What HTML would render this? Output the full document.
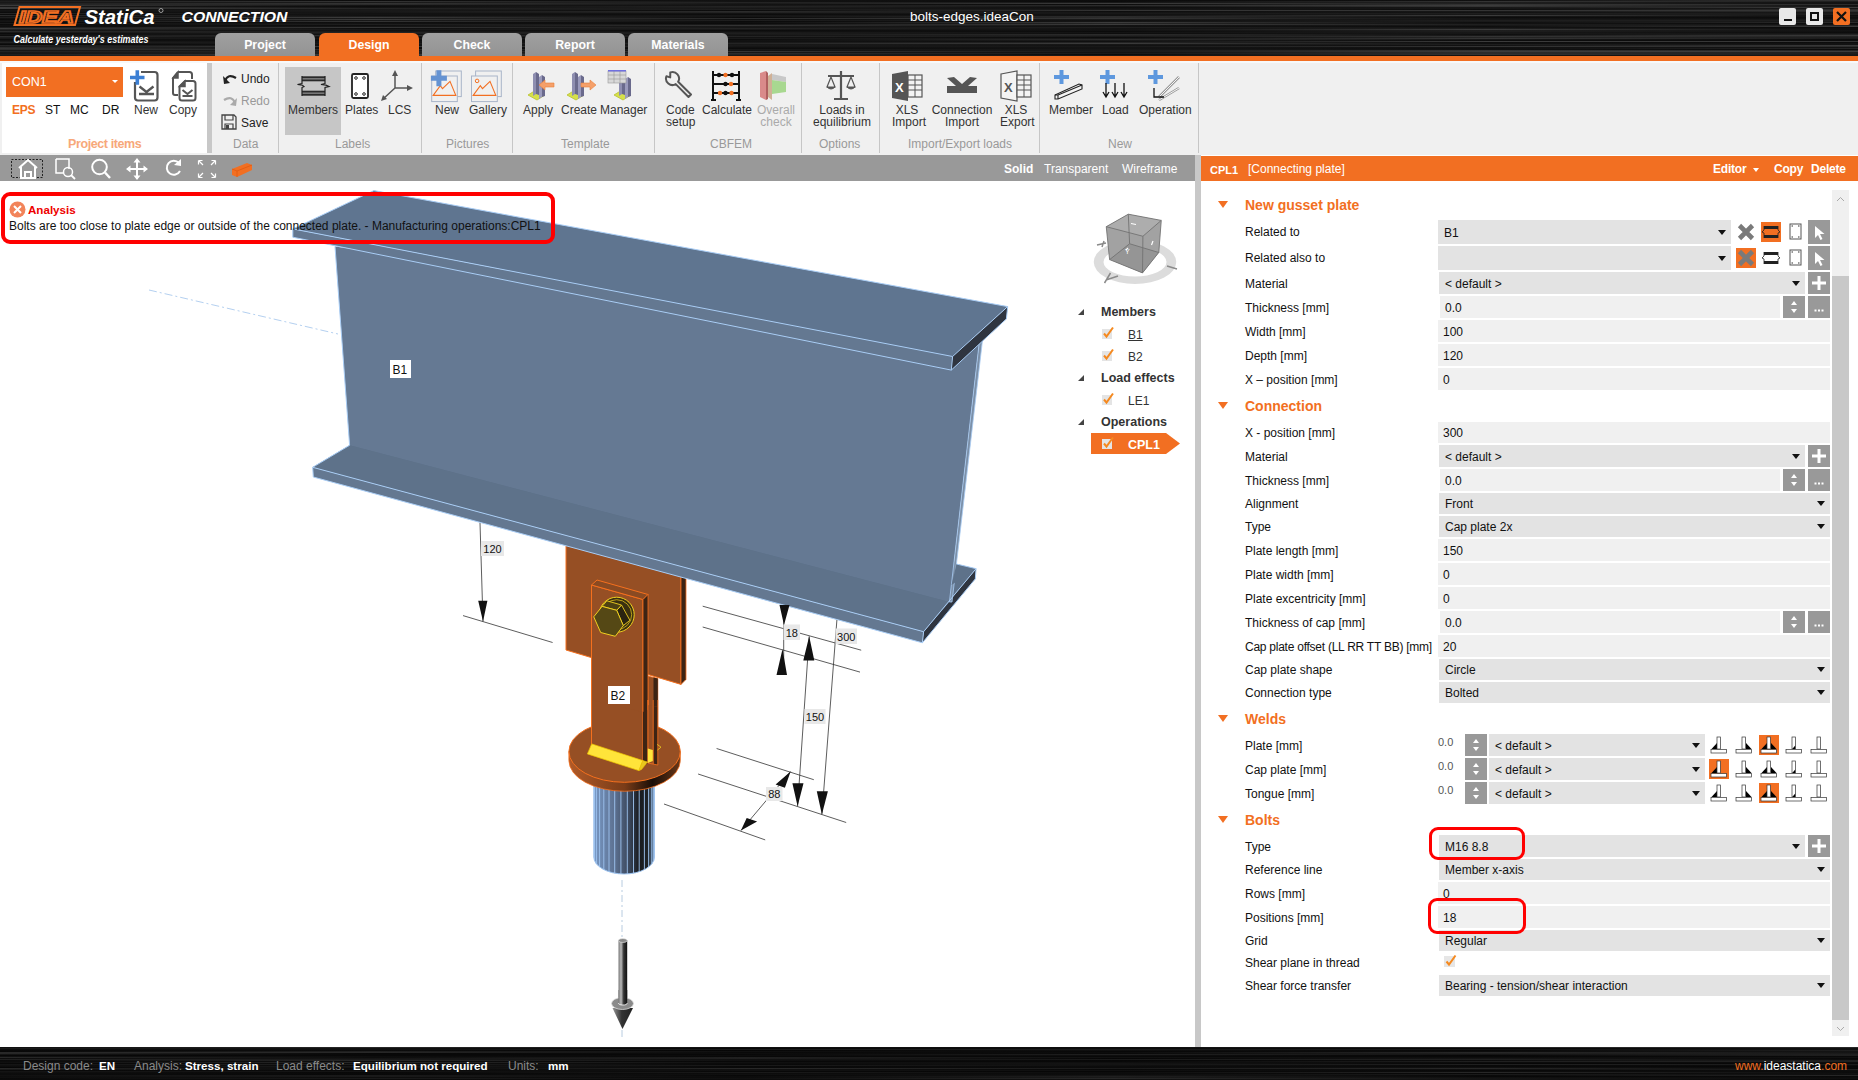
<!DOCTYPE html>
<html><head><meta charset="utf-8">
<style>
*{box-sizing:border-box;margin:0;padding:0}
html,body{width:1858px;height:1080px;overflow:hidden;background:#fff;font-family:"Liberation Sans",sans-serif;}
.a{position:absolute}
#title{left:0;top:0;width:1858px;height:56px;background:
 repeating-linear-gradient(180deg,rgba(255,255,255,0.05) 0px,rgba(0,0,0,0) 1px,rgba(255,255,255,0.03) 2px,rgba(0,0,0,0.1) 3px),
 linear-gradient(90deg,#141414,#1a1a1a 40%,#111 70%,#1a1a1a);}
#orange1{left:0;top:56px;width:1858px;height:5px;background:#f26f22}
#ribbon{left:0;top:61px;width:1858px;height:94px;background:#f0f0f0;border-top:2px solid #f7f9fa}
.tab{top:33px;height:23px;width:100px;border-radius:6px 6px 0 0;background:linear-gradient(#a0a0a0,#939393);color:#fff;font-weight:bold;font-size:12.3px;text-align:center;line-height:24px}
.tab.on{background:#f26f22}
#toolbar{left:0;top:155px;width:1195px;height:26px;background:#999}
#split{left:1195px;top:155px;width:6px;height:892px;background:#c8c8c8}
#phead{left:1201px;top:156px;width:657px;height:25px;background:#f26f22;color:#fff;font-size:13px}
#status{left:0;top:1047px;width:1858px;height:33px;background:
 repeating-linear-gradient(180deg,rgba(255,255,255,0.05) 0px,rgba(0,0,0,0) 1px,rgba(255,255,255,0.03) 2px,rgba(0,0,0,0.1) 3px),
 linear-gradient(90deg,#141414,#1a1a1a 40%,#111 70%,#1a1a1a);color:#fff;font-size:13px}
.sec{font-size:14px;font-weight:bold;color:#f26f22;line-height:16px;white-space:nowrap}
.lab{font-size:12px;color:#111;line-height:13px;white-space:nowrap}
.dd{background:#e3e3e3;font-size:12px;color:#111;padding-left:6px;padding-top:1px;white-space:nowrap}
.inp{background:#f0f0f0;font-size:12px;color:#111;padding-left:5px;padding-top:1px;white-space:nowrap}
.gb{background:#999}
</style></head><body>
<div id="title" class="a"><svg class="a" style="left:0;top:0" width="1858" height="56" viewBox="0 0 1858 56" preserveAspectRatio="none"><defs><linearGradient id="bt0"><stop offset="0.00" stop-color="rgb(24,24,24)"/><stop offset="0.20" stop-color="rgb(12,12,12)"/><stop offset="0.40" stop-color="rgb(18,18,18)"/><stop offset="0.60" stop-color="rgb(12,12,12)"/><stop offset="0.80" stop-color="rgb(16,16,16)"/><stop offset="1.00" stop-color="rgb(52,52,52)"/></linearGradient><linearGradient id="bt1"><stop offset="0.00" stop-color="rgb(30,30,30)"/><stop offset="0.20" stop-color="rgb(52,52,52)"/><stop offset="0.40" stop-color="rgb(18,18,18)"/><stop offset="0.60" stop-color="rgb(11,11,11)"/><stop offset="0.80" stop-color="rgb(52,52,52)"/><stop offset="1.00" stop-color="rgb(30,30,30)"/></linearGradient><linearGradient id="bt2"><stop offset="0.00" stop-color="rgb(24,24,24)"/><stop offset="0.20" stop-color="rgb(24,24,24)"/><stop offset="0.40" stop-color="rgb(36,36,36)"/><stop offset="0.60" stop-color="rgb(24,24,24)"/><stop offset="0.80" stop-color="rgb(30,30,30)"/><stop offset="1.00" stop-color="rgb(18,18,18)"/></linearGradient><linearGradient id="bt3"><stop offset="0.00" stop-color="rgb(30,30,30)"/><stop offset="0.20" stop-color="rgb(52,52,52)"/><stop offset="0.40" stop-color="rgb(24,24,24)"/><stop offset="0.60" stop-color="rgb(60,60,60)"/><stop offset="0.80" stop-color="rgb(30,30,30)"/><stop offset="1.00" stop-color="rgb(17,17,17)"/></linearGradient><linearGradient id="bt4"><stop offset="0.00" stop-color="rgb(36,36,36)"/><stop offset="0.20" stop-color="rgb(44,44,44)"/><stop offset="0.40" stop-color="rgb(19,19,19)"/><stop offset="0.60" stop-color="rgb(12,12,12)"/><stop offset="0.80" stop-color="rgb(52,52,52)"/><stop offset="1.00" stop-color="rgb(44,44,44)"/></linearGradient><linearGradient id="bt5"><stop offset="0.00" stop-color="rgb(60,60,60)"/><stop offset="0.20" stop-color="rgb(18,18,18)"/><stop offset="0.40" stop-color="rgb(20,20,20)"/><stop offset="0.60" stop-color="rgb(44,44,44)"/><stop offset="0.80" stop-color="rgb(60,60,60)"/><stop offset="1.00" stop-color="rgb(18,18,18)"/></linearGradient><linearGradient id="bt6"><stop offset="0.00" stop-color="rgb(25,25,25)"/><stop offset="0.20" stop-color="rgb(12,12,12)"/><stop offset="0.40" stop-color="rgb(36,36,36)"/><stop offset="0.60" stop-color="rgb(24,24,24)"/><stop offset="0.80" stop-color="rgb(52,52,52)"/><stop offset="1.00" stop-color="rgb(21,21,21)"/></linearGradient><linearGradient id="bt7"><stop offset="0.00" stop-color="rgb(60,60,60)"/><stop offset="0.20" stop-color="rgb(18,18,18)"/><stop offset="0.40" stop-color="rgb(30,30,30)"/><stop offset="0.60" stop-color="rgb(14,14,14)"/><stop offset="0.80" stop-color="rgb(22,22,22)"/><stop offset="1.00" stop-color="rgb(60,60,60)"/></linearGradient><linearGradient id="bt8"><stop offset="0.00" stop-color="rgb(60,60,60)"/><stop offset="0.20" stop-color="rgb(36,36,36)"/><stop offset="0.40" stop-color="rgb(23,23,23)"/><stop offset="0.60" stop-color="rgb(18,18,18)"/><stop offset="0.80" stop-color="rgb(21,21,21)"/><stop offset="1.00" stop-color="rgb(22,22,22)"/></linearGradient><linearGradient id="bt9"><stop offset="0.00" stop-color="rgb(14,14,14)"/><stop offset="0.20" stop-color="rgb(24,24,24)"/><stop offset="0.40" stop-color="rgb(30,30,30)"/><stop offset="0.60" stop-color="rgb(24,24,24)"/><stop offset="0.80" stop-color="rgb(12,12,12)"/><stop offset="1.00" stop-color="rgb(44,44,44)"/></linearGradient><linearGradient id="bt10"><stop offset="0.00" stop-color="rgb(20,20,20)"/><stop offset="0.20" stop-color="rgb(26,26,26)"/><stop offset="0.40" stop-color="rgb(11,11,11)"/><stop offset="0.60" stop-color="rgb(52,52,52)"/><stop offset="0.80" stop-color="rgb(52,52,52)"/><stop offset="1.00" stop-color="rgb(52,52,52)"/></linearGradient><linearGradient id="bt11"><stop offset="0.00" stop-color="rgb(18,18,18)"/><stop offset="0.20" stop-color="rgb(24,24,24)"/><stop offset="0.40" stop-color="rgb(44,44,44)"/><stop offset="0.60" stop-color="rgb(13,13,13)"/><stop offset="0.80" stop-color="rgb(24,24,24)"/><stop offset="1.00" stop-color="rgb(44,44,44)"/></linearGradient><linearGradient id="bt12"><stop offset="0.00" stop-color="rgb(12,12,12)"/><stop offset="0.20" stop-color="rgb(22,22,22)"/><stop offset="0.40" stop-color="rgb(36,36,36)"/><stop offset="0.60" stop-color="rgb(21,21,21)"/><stop offset="0.80" stop-color="rgb(18,18,18)"/><stop offset="1.00" stop-color="rgb(24,24,24)"/></linearGradient><linearGradient id="bt13"><stop offset="0.00" stop-color="rgb(36,36,36)"/><stop offset="0.20" stop-color="rgb(18,18,18)"/><stop offset="0.40" stop-color="rgb(18,18,18)"/><stop offset="0.60" stop-color="rgb(24,24,24)"/><stop offset="0.80" stop-color="rgb(30,30,30)"/><stop offset="1.00" stop-color="rgb(26,26,26)"/></linearGradient><linearGradient id="bt14"><stop offset="0.00" stop-color="rgb(12,12,12)"/><stop offset="0.20" stop-color="rgb(19,19,19)"/><stop offset="0.40" stop-color="rgb(12,12,12)"/><stop offset="0.60" stop-color="rgb(18,18,18)"/><stop offset="0.80" stop-color="rgb(24,24,24)"/><stop offset="1.00" stop-color="rgb(30,30,30)"/></linearGradient><linearGradient id="bt15"><stop offset="0.00" stop-color="rgb(44,44,44)"/><stop offset="0.20" stop-color="rgb(16,16,16)"/><stop offset="0.40" stop-color="rgb(22,22,22)"/><stop offset="0.60" stop-color="rgb(17,17,17)"/><stop offset="0.80" stop-color="rgb(60,60,60)"/><stop offset="1.00" stop-color="rgb(12,12,12)"/></linearGradient><linearGradient id="bt16"><stop offset="0.00" stop-color="rgb(18,18,18)"/><stop offset="0.20" stop-color="rgb(30,30,30)"/><stop offset="0.40" stop-color="rgb(21,21,21)"/><stop offset="0.60" stop-color="rgb(44,44,44)"/><stop offset="0.80" stop-color="rgb(21,21,21)"/><stop offset="1.00" stop-color="rgb(18,18,18)"/></linearGradient><linearGradient id="bt17"><stop offset="0.00" stop-color="rgb(30,30,30)"/><stop offset="0.20" stop-color="rgb(60,60,60)"/><stop offset="0.40" stop-color="rgb(10,10,10)"/><stop offset="0.60" stop-color="rgb(44,44,44)"/><stop offset="0.80" stop-color="rgb(12,12,12)"/><stop offset="1.00" stop-color="rgb(13,13,13)"/></linearGradient><linearGradient id="bt18"><stop offset="0.00" stop-color="rgb(16,16,16)"/><stop offset="0.20" stop-color="rgb(24,24,24)"/><stop offset="0.40" stop-color="rgb(44,44,44)"/><stop offset="0.60" stop-color="rgb(52,52,52)"/><stop offset="0.80" stop-color="rgb(18,18,18)"/><stop offset="1.00" stop-color="rgb(15,15,15)"/></linearGradient><linearGradient id="bt19"><stop offset="0.00" stop-color="rgb(10,10,10)"/><stop offset="0.20" stop-color="rgb(60,60,60)"/><stop offset="0.40" stop-color="rgb(14,14,14)"/><stop offset="0.60" stop-color="rgb(25,25,25)"/><stop offset="0.80" stop-color="rgb(21,21,21)"/><stop offset="1.00" stop-color="rgb(24,24,24)"/></linearGradient><linearGradient id="bt20"><stop offset="0.00" stop-color="rgb(18,18,18)"/><stop offset="0.20" stop-color="rgb(24,24,24)"/><stop offset="0.40" stop-color="rgb(30,30,30)"/><stop offset="0.60" stop-color="rgb(16,16,16)"/><stop offset="0.80" stop-color="rgb(30,30,30)"/><stop offset="1.00" stop-color="rgb(30,30,30)"/></linearGradient><linearGradient id="bt21"><stop offset="0.00" stop-color="rgb(20,20,20)"/><stop offset="0.20" stop-color="rgb(52,52,52)"/><stop offset="0.40" stop-color="rgb(11,11,11)"/><stop offset="0.60" stop-color="rgb(21,21,21)"/><stop offset="0.80" stop-color="rgb(26,26,26)"/><stop offset="1.00" stop-color="rgb(24,24,24)"/></linearGradient><linearGradient id="bt22"><stop offset="0.00" stop-color="rgb(12,12,12)"/><stop offset="0.20" stop-color="rgb(15,15,15)"/><stop offset="0.40" stop-color="rgb(14,14,14)"/><stop offset="0.60" stop-color="rgb(60,60,60)"/><stop offset="0.80" stop-color="rgb(13,13,13)"/><stop offset="1.00" stop-color="rgb(44,44,44)"/></linearGradient><linearGradient id="bt23"><stop offset="0.00" stop-color="rgb(26,26,26)"/><stop offset="0.20" stop-color="rgb(18,18,18)"/><stop offset="0.40" stop-color="rgb(11,11,11)"/><stop offset="0.60" stop-color="rgb(36,36,36)"/><stop offset="0.80" stop-color="rgb(18,18,18)"/><stop offset="1.00" stop-color="rgb(12,12,12)"/></linearGradient><linearGradient id="bt24"><stop offset="0.00" stop-color="rgb(12,12,12)"/><stop offset="0.20" stop-color="rgb(30,30,30)"/><stop offset="0.40" stop-color="rgb(24,24,24)"/><stop offset="0.60" stop-color="rgb(60,60,60)"/><stop offset="0.80" stop-color="rgb(30,30,30)"/><stop offset="1.00" stop-color="rgb(18,18,18)"/></linearGradient><linearGradient id="bt25"><stop offset="0.00" stop-color="rgb(16,16,16)"/><stop offset="0.20" stop-color="rgb(14,14,14)"/><stop offset="0.40" stop-color="rgb(52,52,52)"/><stop offset="0.60" stop-color="rgb(18,18,18)"/><stop offset="0.80" stop-color="rgb(23,23,23)"/><stop offset="1.00" stop-color="rgb(36,36,36)"/></linearGradient><linearGradient id="bt26"><stop offset="0.00" stop-color="rgb(14,14,14)"/><stop offset="0.20" stop-color="rgb(21,21,21)"/><stop offset="0.40" stop-color="rgb(24,24,24)"/><stop offset="0.60" stop-color="rgb(17,17,17)"/><stop offset="0.80" stop-color="rgb(13,13,13)"/><stop offset="1.00" stop-color="rgb(60,60,60)"/></linearGradient><linearGradient id="bt27"><stop offset="0.00" stop-color="rgb(30,30,30)"/><stop offset="0.20" stop-color="rgb(52,52,52)"/><stop offset="0.40" stop-color="rgb(22,22,22)"/><stop offset="0.60" stop-color="rgb(30,30,30)"/><stop offset="0.80" stop-color="rgb(18,18,18)"/><stop offset="1.00" stop-color="rgb(10,10,10)"/></linearGradient><linearGradient id="bt28"><stop offset="0.00" stop-color="rgb(60,60,60)"/><stop offset="0.20" stop-color="rgb(12,12,12)"/><stop offset="0.40" stop-color="rgb(36,36,36)"/><stop offset="0.60" stop-color="rgb(18,18,18)"/><stop offset="0.80" stop-color="rgb(30,30,30)"/><stop offset="1.00" stop-color="rgb(13,13,13)"/></linearGradient><linearGradient id="bt29"><stop offset="0.00" stop-color="rgb(36,36,36)"/><stop offset="0.20" stop-color="rgb(24,24,24)"/><stop offset="0.40" stop-color="rgb(24,24,24)"/><stop offset="0.60" stop-color="rgb(18,18,18)"/><stop offset="0.80" stop-color="rgb(60,60,60)"/><stop offset="1.00" stop-color="rgb(12,12,12)"/></linearGradient><linearGradient id="bt30"><stop offset="0.00" stop-color="rgb(24,24,24)"/><stop offset="0.20" stop-color="rgb(18,18,18)"/><stop offset="0.40" stop-color="rgb(12,12,12)"/><stop offset="0.60" stop-color="rgb(18,18,18)"/><stop offset="0.80" stop-color="rgb(30,30,30)"/><stop offset="1.00" stop-color="rgb(18,18,18)"/></linearGradient><linearGradient id="bt31"><stop offset="0.00" stop-color="rgb(44,44,44)"/><stop offset="0.20" stop-color="rgb(23,23,23)"/><stop offset="0.40" stop-color="rgb(18,18,18)"/><stop offset="0.60" stop-color="rgb(11,11,11)"/><stop offset="0.80" stop-color="rgb(30,30,30)"/><stop offset="1.00" stop-color="rgb(15,15,15)"/></linearGradient><linearGradient id="bt32"><stop offset="0.00" stop-color="rgb(24,24,24)"/><stop offset="0.20" stop-color="rgb(36,36,36)"/><stop offset="0.40" stop-color="rgb(26,26,26)"/><stop offset="0.60" stop-color="rgb(19,19,19)"/><stop offset="0.80" stop-color="rgb(24,24,24)"/><stop offset="1.00" stop-color="rgb(12,12,12)"/></linearGradient><linearGradient id="bt33"><stop offset="0.00" stop-color="rgb(11,11,11)"/><stop offset="0.20" stop-color="rgb(30,30,30)"/><stop offset="0.40" stop-color="rgb(30,30,30)"/><stop offset="0.60" stop-color="rgb(13,13,13)"/><stop offset="0.80" stop-color="rgb(23,23,23)"/><stop offset="1.00" stop-color="rgb(22,22,22)"/></linearGradient><linearGradient id="bt34"><stop offset="0.00" stop-color="rgb(19,19,19)"/><stop offset="0.20" stop-color="rgb(17,17,17)"/><stop offset="0.40" stop-color="rgb(24,24,24)"/><stop offset="0.60" stop-color="rgb(44,44,44)"/><stop offset="0.80" stop-color="rgb(14,14,14)"/><stop offset="1.00" stop-color="rgb(36,36,36)"/></linearGradient><linearGradient id="bt35"><stop offset="0.00" stop-color="rgb(12,12,12)"/><stop offset="0.20" stop-color="rgb(52,52,52)"/><stop offset="0.40" stop-color="rgb(19,19,19)"/><stop offset="0.60" stop-color="rgb(36,36,36)"/><stop offset="0.80" stop-color="rgb(24,24,24)"/><stop offset="1.00" stop-color="rgb(60,60,60)"/></linearGradient><linearGradient id="bt36"><stop offset="0.00" stop-color="rgb(44,44,44)"/><stop offset="0.20" stop-color="rgb(20,20,20)"/><stop offset="0.40" stop-color="rgb(36,36,36)"/><stop offset="0.60" stop-color="rgb(24,24,24)"/><stop offset="0.80" stop-color="rgb(52,52,52)"/><stop offset="1.00" stop-color="rgb(36,36,36)"/></linearGradient><linearGradient id="bt37"><stop offset="0.00" stop-color="rgb(30,30,30)"/><stop offset="0.20" stop-color="rgb(12,12,12)"/><stop offset="0.40" stop-color="rgb(18,18,18)"/><stop offset="0.60" stop-color="rgb(12,12,12)"/><stop offset="0.80" stop-color="rgb(36,36,36)"/><stop offset="1.00" stop-color="rgb(30,30,30)"/></linearGradient><linearGradient id="bt38"><stop offset="0.00" stop-color="rgb(24,24,24)"/><stop offset="0.20" stop-color="rgb(22,22,22)"/><stop offset="0.40" stop-color="rgb(25,25,25)"/><stop offset="0.60" stop-color="rgb(24,24,24)"/><stop offset="0.80" stop-color="rgb(52,52,52)"/><stop offset="1.00" stop-color="rgb(26,26,26)"/></linearGradient><linearGradient id="bt39"><stop offset="0.00" stop-color="rgb(12,12,12)"/><stop offset="0.20" stop-color="rgb(17,17,17)"/><stop offset="0.40" stop-color="rgb(12,12,12)"/><stop offset="0.60" stop-color="rgb(44,44,44)"/><stop offset="0.80" stop-color="rgb(22,22,22)"/><stop offset="1.00" stop-color="rgb(11,11,11)"/></linearGradient><linearGradient id="bt40"><stop offset="0.00" stop-color="rgb(17,17,17)"/><stop offset="0.20" stop-color="rgb(12,12,12)"/><stop offset="0.40" stop-color="rgb(18,18,18)"/><stop offset="0.60" stop-color="rgb(26,26,26)"/><stop offset="0.80" stop-color="rgb(12,12,12)"/><stop offset="1.00" stop-color="rgb(12,12,12)"/></linearGradient><linearGradient id="bt41"><stop offset="0.00" stop-color="rgb(25,25,25)"/><stop offset="0.20" stop-color="rgb(18,18,18)"/><stop offset="0.40" stop-color="rgb(17,17,17)"/><stop offset="0.60" stop-color="rgb(16,16,16)"/><stop offset="0.80" stop-color="rgb(60,60,60)"/><stop offset="1.00" stop-color="rgb(52,52,52)"/></linearGradient><linearGradient id="bt42"><stop offset="0.00" stop-color="rgb(36,36,36)"/><stop offset="0.20" stop-color="rgb(16,16,16)"/><stop offset="0.40" stop-color="rgb(24,24,24)"/><stop offset="0.60" stop-color="rgb(36,36,36)"/><stop offset="0.80" stop-color="rgb(14,14,14)"/><stop offset="1.00" stop-color="rgb(12,12,12)"/></linearGradient><linearGradient id="bt43"><stop offset="0.00" stop-color="rgb(18,18,18)"/><stop offset="0.20" stop-color="rgb(25,25,25)"/><stop offset="0.40" stop-color="rgb(36,36,36)"/><stop offset="0.60" stop-color="rgb(60,60,60)"/><stop offset="0.80" stop-color="rgb(16,16,16)"/><stop offset="1.00" stop-color="rgb(18,18,18)"/></linearGradient><linearGradient id="bt44"><stop offset="0.00" stop-color="rgb(10,10,10)"/><stop offset="0.20" stop-color="rgb(18,18,18)"/><stop offset="0.40" stop-color="rgb(24,24,24)"/><stop offset="0.60" stop-color="rgb(22,22,22)"/><stop offset="0.80" stop-color="rgb(30,30,30)"/><stop offset="1.00" stop-color="rgb(18,18,18)"/></linearGradient><linearGradient id="bt45"><stop offset="0.00" stop-color="rgb(36,36,36)"/><stop offset="0.20" stop-color="rgb(14,14,14)"/><stop offset="0.40" stop-color="rgb(26,26,26)"/><stop offset="0.60" stop-color="rgb(18,18,18)"/><stop offset="0.80" stop-color="rgb(17,17,17)"/><stop offset="1.00" stop-color="rgb(60,60,60)"/></linearGradient><linearGradient id="bt46"><stop offset="0.00" stop-color="rgb(24,24,24)"/><stop offset="0.20" stop-color="rgb(60,60,60)"/><stop offset="0.40" stop-color="rgb(22,22,22)"/><stop offset="0.60" stop-color="rgb(24,24,24)"/><stop offset="0.80" stop-color="rgb(52,52,52)"/><stop offset="1.00" stop-color="rgb(44,44,44)"/></linearGradient><linearGradient id="bt47"><stop offset="0.00" stop-color="rgb(44,44,44)"/><stop offset="0.20" stop-color="rgb(13,13,13)"/><stop offset="0.40" stop-color="rgb(16,16,16)"/><stop offset="0.60" stop-color="rgb(19,19,19)"/><stop offset="0.80" stop-color="rgb(18,18,18)"/><stop offset="1.00" stop-color="rgb(18,18,18)"/></linearGradient><linearGradient id="bt48"><stop offset="0.00" stop-color="rgb(52,52,52)"/><stop offset="0.20" stop-color="rgb(11,11,11)"/><stop offset="0.40" stop-color="rgb(12,12,12)"/><stop offset="0.60" stop-color="rgb(19,19,19)"/><stop offset="0.80" stop-color="rgb(14,14,14)"/><stop offset="1.00" stop-color="rgb(36,36,36)"/></linearGradient><linearGradient id="bt49"><stop offset="0.00" stop-color="rgb(44,44,44)"/><stop offset="0.20" stop-color="rgb(44,44,44)"/><stop offset="0.40" stop-color="rgb(23,23,23)"/><stop offset="0.60" stop-color="rgb(22,22,22)"/><stop offset="0.80" stop-color="rgb(16,16,16)"/><stop offset="1.00" stop-color="rgb(11,11,11)"/></linearGradient><linearGradient id="bt50"><stop offset="0.00" stop-color="rgb(23,23,23)"/><stop offset="0.20" stop-color="rgb(24,24,24)"/><stop offset="0.40" stop-color="rgb(19,19,19)"/><stop offset="0.60" stop-color="rgb(24,24,24)"/><stop offset="0.80" stop-color="rgb(52,52,52)"/><stop offset="1.00" stop-color="rgb(36,36,36)"/></linearGradient><linearGradient id="bt51"><stop offset="0.00" stop-color="rgb(36,36,36)"/><stop offset="0.20" stop-color="rgb(30,30,30)"/><stop offset="0.40" stop-color="rgb(52,52,52)"/><stop offset="0.60" stop-color="rgb(24,24,24)"/><stop offset="0.80" stop-color="rgb(60,60,60)"/><stop offset="1.00" stop-color="rgb(60,60,60)"/></linearGradient><linearGradient id="bt52"><stop offset="0.00" stop-color="rgb(24,24,24)"/><stop offset="0.20" stop-color="rgb(30,30,30)"/><stop offset="0.40" stop-color="rgb(24,24,24)"/><stop offset="0.60" stop-color="rgb(18,18,18)"/><stop offset="0.80" stop-color="rgb(44,44,44)"/><stop offset="1.00" stop-color="rgb(30,30,30)"/></linearGradient><linearGradient id="bt53"><stop offset="0.00" stop-color="rgb(23,23,23)"/><stop offset="0.20" stop-color="rgb(30,30,30)"/><stop offset="0.40" stop-color="rgb(44,44,44)"/><stop offset="0.60" stop-color="rgb(25,25,25)"/><stop offset="0.80" stop-color="rgb(44,44,44)"/><stop offset="1.00" stop-color="rgb(30,30,30)"/></linearGradient><linearGradient id="bt54"><stop offset="0.00" stop-color="rgb(30,30,30)"/><stop offset="0.20" stop-color="rgb(60,60,60)"/><stop offset="0.40" stop-color="rgb(36,36,36)"/><stop offset="0.60" stop-color="rgb(10,10,10)"/><stop offset="0.80" stop-color="rgb(52,52,52)"/><stop offset="1.00" stop-color="rgb(25,25,25)"/></linearGradient><linearGradient id="bt55"><stop offset="0.00" stop-color="rgb(25,25,25)"/><stop offset="0.20" stop-color="rgb(52,52,52)"/><stop offset="0.40" stop-color="rgb(26,26,26)"/><stop offset="0.60" stop-color="rgb(24,24,24)"/><stop offset="0.80" stop-color="rgb(18,18,18)"/><stop offset="1.00" stop-color="rgb(24,24,24)"/></linearGradient></defs><rect x="0" y="0" width="1858" height="1" fill="url(#bt0)"/><rect x="0" y="1" width="1858" height="1" fill="url(#bt1)"/><rect x="0" y="2" width="1858" height="1" fill="url(#bt2)"/><rect x="0" y="3" width="1858" height="1" fill="url(#bt3)"/><rect x="0" y="4" width="1858" height="1" fill="url(#bt4)"/><rect x="0" y="5" width="1858" height="1" fill="url(#bt5)"/><rect x="0" y="6" width="1858" height="1" fill="url(#bt6)"/><rect x="0" y="7" width="1858" height="1" fill="url(#bt7)"/><rect x="0" y="8" width="1858" height="1" fill="url(#bt8)"/><rect x="0" y="9" width="1858" height="1" fill="url(#bt9)"/><rect x="0" y="10" width="1858" height="1" fill="url(#bt10)"/><rect x="0" y="11" width="1858" height="1" fill="url(#bt11)"/><rect x="0" y="12" width="1858" height="1" fill="url(#bt12)"/><rect x="0" y="13" width="1858" height="1" fill="url(#bt13)"/><rect x="0" y="14" width="1858" height="1" fill="url(#bt14)"/><rect x="0" y="15" width="1858" height="1" fill="url(#bt15)"/><rect x="0" y="16" width="1858" height="1" fill="url(#bt16)"/><rect x="0" y="17" width="1858" height="1" fill="url(#bt17)"/><rect x="0" y="18" width="1858" height="1" fill="url(#bt18)"/><rect x="0" y="19" width="1858" height="1" fill="url(#bt19)"/><rect x="0" y="20" width="1858" height="1" fill="url(#bt20)"/><rect x="0" y="21" width="1858" height="1" fill="url(#bt21)"/><rect x="0" y="22" width="1858" height="1" fill="url(#bt22)"/><rect x="0" y="23" width="1858" height="1" fill="url(#bt23)"/><rect x="0" y="24" width="1858" height="1" fill="url(#bt24)"/><rect x="0" y="25" width="1858" height="1" fill="url(#bt25)"/><rect x="0" y="26" width="1858" height="1" fill="url(#bt26)"/><rect x="0" y="27" width="1858" height="1" fill="url(#bt27)"/><rect x="0" y="28" width="1858" height="1" fill="url(#bt28)"/><rect x="0" y="29" width="1858" height="1" fill="url(#bt29)"/><rect x="0" y="30" width="1858" height="1" fill="url(#bt30)"/><rect x="0" y="31" width="1858" height="1" fill="url(#bt31)"/><rect x="0" y="32" width="1858" height="1" fill="url(#bt32)"/><rect x="0" y="33" width="1858" height="1" fill="url(#bt33)"/><rect x="0" y="34" width="1858" height="1" fill="url(#bt34)"/><rect x="0" y="35" width="1858" height="1" fill="url(#bt35)"/><rect x="0" y="36" width="1858" height="1" fill="url(#bt36)"/><rect x="0" y="37" width="1858" height="1" fill="url(#bt37)"/><rect x="0" y="38" width="1858" height="1" fill="url(#bt38)"/><rect x="0" y="39" width="1858" height="1" fill="url(#bt39)"/><rect x="0" y="40" width="1858" height="1" fill="url(#bt40)"/><rect x="0" y="41" width="1858" height="1" fill="url(#bt41)"/><rect x="0" y="42" width="1858" height="1" fill="url(#bt42)"/><rect x="0" y="43" width="1858" height="1" fill="url(#bt43)"/><rect x="0" y="44" width="1858" height="1" fill="url(#bt44)"/><rect x="0" y="45" width="1858" height="1" fill="url(#bt45)"/><rect x="0" y="46" width="1858" height="1" fill="url(#bt46)"/><rect x="0" y="47" width="1858" height="1" fill="url(#bt47)"/><rect x="0" y="48" width="1858" height="1" fill="url(#bt48)"/><rect x="0" y="49" width="1858" height="1" fill="url(#bt49)"/><rect x="0" y="50" width="1858" height="1" fill="url(#bt50)"/><rect x="0" y="51" width="1858" height="1" fill="url(#bt51)"/><rect x="0" y="52" width="1858" height="1" fill="url(#bt52)"/><rect x="0" y="53" width="1858" height="1" fill="url(#bt53)"/><rect x="0" y="54" width="1858" height="1" fill="url(#bt54)"/><rect x="0" y="55" width="1858" height="1" fill="url(#bt55)"/></svg></div>
<div id="orange1" class="a"></div>
<div id="ribbon" class="a"></div>
<div class="a tab" style="left:215px">Project</div>
<div class="a tab on" style="left:319px">Design</div>
<div class="a tab" style="left:422px">Check</div>
<div class="a tab" style="left:525px">Report</div>
<div class="a tab" style="left:628px">Materials</div>

<!-- logo -->
<svg class="a" style="left:0;top:0" width="300" height="56" viewBox="0 0 300 56">
 <path d="M19.5 7 H80 L75 25 H14.5 Z" fill="none" stroke="#f26f22" stroke-width="2"/>
 <text x="19" y="22.5" font-family="Liberation Sans" font-weight="bold" font-style="italic" font-size="16" fill="none" stroke="#f26f22" stroke-width="1.6" textLength="55" lengthAdjust="spacingAndGlyphs">IDEA</text>
 <text x="84.5" y="23.5" font-family="Liberation Sans" font-weight="bold" font-style="italic" font-size="19.5" fill="#fff" textLength="70" lengthAdjust="spacingAndGlyphs">StatiCa</text>
 <circle cx="161" cy="10.5" r="2" fill="none" stroke="#bbb" stroke-width="0.8"/>
 <text x="181.5" y="22" font-family="Liberation Sans" font-weight="bold" font-style="italic" font-size="15.5" fill="#fff" textLength="106" lengthAdjust="spacingAndGlyphs">CONNECTION</text>
 <text x="13.5" y="42.5" font-family="Liberation Sans" font-weight="bold" font-style="italic" font-size="10" fill="#fff" textLength="135" lengthAdjust="spacingAndGlyphs">Calculate yesterday's estimates</text>
</svg>
<div class="a" style="left:910px;top:9px;color:#fff;font-size:13.5px">bolts-edges.ideaCon</div>
<div class="a" style="left:1779px;top:8px;width:17px;height:17px;background:#e8e8e8;border-radius:2px"><div class="a" style="left:5px;top:11px;width:8px;height:2px;background:#111"></div></div>
<div class="a" style="left:1806px;top:8px;width:17px;height:17px;background:#e8e8e8;border-radius:2px"><div class="a" style="left:4px;top:4px;width:9px;height:9px;border:2px solid #111"></div></div>
<div class="a" style="left:1833px;top:8px;width:17px;height:17px;background:#f26f22;border-radius:2px"><svg class="a" style="left:0;top:0" width="17" height="17"><path d="M4 4 L13 13 M13 4 L4 13" stroke="#111" stroke-width="2.2"/></svg></div>

<!-- ribbon groups -->
<div class="a" style="left:2px;top:63px;width:205px;height:90px;background:#fff"></div>
<div class="a" style="left:207px;top:63px;width:5px;height:90px;background:#c8c8c8"></div>
<div class="a" style="left:6px;top:67px;width:117px;height:30px;background:#f26f22;color:#fff;font-size:12.5px;line-height:30px;padding-left:6px">CON1</div>
<svg class="a" style="left:112px;top:80px" width="6" height="4"><path d="M0 0H6L3 3Z" fill="#fff"/></svg>
<div class="a" style="left:12px;top:103px;font-size:12px;font-weight:bold;color:#f26f22;letter-spacing:-0.3px">EPS</div>
<div class="a" style="left:45px;top:103px;font-size:12px;color:#111">ST</div>
<div class="a" style="left:70px;top:103px;font-size:12px;color:#111">MC</div>
<div class="a" style="left:102px;top:103px;font-size:12px;color:#111">DR</div>
<svg class="a" style="left:128px;top:68px" width="34" height="36" viewBox="0 0 34 36">
 <path d="M13 4 H26.5 Q29.5 4 29.5 7 V29.5 Q29.5 32.5 26.5 32.5 H10 Q7 32.5 7 29.5 V14" fill="none" stroke="#555" stroke-width="2.2"/>
 <path d="M11.5 18.5 L18.5 24 L25.5 18.5 M11 26 H26" fill="none" stroke="#555" stroke-width="2.4"/>
 <path d="M2 9.5 H16.5 M9.3 2.3 V16.7" stroke="#3b7fd4" stroke-width="3.6"/>
</svg>
<div class="a" style="left:134px;top:103px;font-size:12px;color:#333">New</div>
<svg class="a" style="left:168px;top:68px" width="34" height="36" viewBox="0 0 34 36">
 <path d="M10 4 H21.5 Q24 4 24 6.5 V11 M5 25 Q5 27 7 27 H10 M5 25 V10 L10 4" fill="none" stroke="#555" stroke-width="2"/>
 <path d="M5 10 L10 4 V10 Z" fill="#555" stroke="#555" stroke-width="1.5"/>
 <path d="M17 13 H25 Q27.5 13 27.5 15.5 V30 Q27.5 32.5 25 32.5 H14 Q11.5 32.5 11.5 30 V18.5 Z" fill="#fff" stroke="#555" stroke-width="2"/>
 <path d="M11.5 18.5 L17 13 V18.5 Z" fill="#555" stroke="#555" stroke-width="1.5"/>
 <path d="M14.5 22 L19.5 26 L24.5 22 M14.5 28 H24.5" fill="none" stroke="#555" stroke-width="2"/>
</svg>
<div class="a" style="left:169px;top:103px;font-size:12px;color:#333">Copy</div>
<div class="a glabel" style="left:68px;top:137px;color:#f7a87a;font-size:12.5px;font-weight:bold;letter-spacing:-0.4px">Project items</div>

<svg class="a" style="left:222px;top:72px" width="16" height="14" viewBox="0 0 16 14"><path d="M3 9 Q6 1 14 6" fill="none" stroke="#222" stroke-width="2.2"/><path d="M1 4 L2 12 L8 11 Z" fill="#222"/></svg>
<div class="a" style="left:241px;top:72px;font-size:12px;color:#222">Undo</div>
<svg class="a" style="left:222px;top:94px" width="16" height="14" viewBox="0 0 16 14"><path d="M13 9 Q10 1 2 6" fill="none" stroke="#aaa" stroke-width="2.2"/><path d="M15 4 L14 12 L8 11 Z" fill="#aaa"/></svg>
<div class="a" style="left:241px;top:94px;font-size:12px;color:#999">Redo</div>
<svg class="a" style="left:221px;top:114px" width="16" height="16" viewBox="0 0 16 16"><path d="M1 1 H13 L15 3 V15 H1 Z" fill="none" stroke="#444" stroke-width="1.3"/><path d="M4 1 V6 H12 V1 M4 15 V10 H12 V15" fill="none" stroke="#444" stroke-width="1.2"/><rect x="5" y="11" width="3" height="4" fill="#444"/></svg>
<div class="a" style="left:241px;top:116px;font-size:12px;color:#222">Save</div>
<div class="a glabel" style="left:233px;top:137px;color:#999;font-size:12px">Data</div>
<div class="a" style="left:278px;top:63px;width:1px;height:90px;background:#c6c6c6"></div>

<div class="a" style="left:285px;top:67px;width:56px;height:68px;background:#c6c6c6"></div>
<svg class="a" style="left:295px;top:74px" width="36" height="24" viewBox="0 0 36 24">
 <rect x="7" y="2.3" width="23" height="5" fill="#2a2a2a"/><rect x="7" y="4" width="23" height="1.6" fill="#777"/>
 <rect x="7" y="16.7" width="23" height="5" fill="#2a2a2a"/><rect x="7" y="18.4" width="23" height="1.6" fill="#777"/>
 <path d="M7 2 V9.5 L2.5 10.5 L7.5 11.2 L9 12.5 L7 13.5 V22 M30 2 V9.5 L26 10.5 L31 11.2 L34 12.5 L30 13.5 V22" fill="none" stroke="#222" stroke-width="1.2"/>
</svg>
<div class="a" style="left:288px;top:103px;font-size:12px;color:#333">Members</div>
<svg class="a" style="left:350px;top:72px" width="20" height="28" viewBox="0 0 20 28"><rect x="2" y="2" width="16" height="24" rx="1.5" fill="#fff" stroke="#222" stroke-width="1.8"/><circle cx="6" cy="6" r="1.3" fill="none" stroke="#222"/><circle cx="14" cy="6" r="1.3" fill="none" stroke="#222"/><circle cx="6" cy="22" r="1.3" fill="none" stroke="#222"/><circle cx="14" cy="22" r="1.3" fill="none" stroke="#222"/></svg>
<div class="a" style="left:345px;top:103px;font-size:12px;color:#333">Plates</div>
<svg class="a" style="left:378px;top:70px" width="36" height="32" viewBox="0 0 36 32"><path d="M17 3 V18 L32 18 M17 18 L5 29" fill="none" stroke="#555" stroke-width="1.5"/><path d="M17 0 L14 6 H20 Z M35 18 L29 15 V21 Z M3 31 L5 25 L9 29 Z" fill="#555"/></svg>
<div class="a" style="left:388px;top:103px;font-size:12px;color:#333">LCS</div>
<div class="a glabel" style="left:335px;top:137px;color:#999;font-size:12px">Labels</div>
<div class="a" style="left:421px;top:63px;width:1px;height:90px;background:#c6c6c6"></div>

<svg class="a" style="left:430px;top:69px" width="34" height="34" viewBox="0 0 34 34"><rect x="5.7" y="2" width="25.6" height="25.6" fill="none" stroke="#a8b4c8" stroke-width="1"/><rect x="1.7" y="7" width="25.6" height="25.6" fill="#f0f0f0" stroke="#a8b4c8" stroke-width="1"/><path d="M3.2 26.4 L10.3 16.6 L12.5 19.6 L20 12.4 L25.8 26.4 Z" fill="none" stroke="#f26f22" stroke-width="1.1"/><path d="M0.9 9.2 H16.9 M8.9 1.2 V17.2" stroke="#6593d2" stroke-width="5"/></svg>
<div class="a" style="left:435px;top:103px;font-size:12px;color:#333">New</div>
<svg class="a" style="left:470px;top:69px" width="34" height="34" viewBox="0 0 34 34"><rect x="5.6" y="2" width="25.7" height="25.6" fill="none" stroke="#a8b4c8" stroke-width="1"/><rect x="1.5" y="7" width="25.8" height="25.6" fill="#f0f0f0" stroke="#a8b4c8" stroke-width="1"/><path d="M3.2 26.4 L10.3 16.6 L12.5 19.6 L20 12.4 L25.8 26.4 Z" fill="none" stroke="#f26f22" stroke-width="1.1"/><circle cx="7.1" cy="11.9" r="1.8" fill="none" stroke="#f26f22" stroke-width="1"/></svg>
<div class="a" style="left:469px;top:103px;font-size:12px;color:#333">Gallery</div>
<div class="a glabel" style="left:446px;top:137px;color:#999;font-size:12px">Pictures</div>
<div class="a" style="left:512px;top:63px;width:1px;height:90px;background:#c6c6c6"></div>


<!-- template -->
<svg class="a" style="left:526px;top:69px" width="34" height="34" viewBox="0 0 34 34">
 <path d="M2 26 L10 21 L19 26 L11 31 Z" fill="#d6e04a" stroke="#b8c030" stroke-width="0.8"/>
 <path d="M7 5 L10 3 V25 L7 27 Z" fill="#8e8eb0"/><path d="M10 3 L13 5 V26 L10 25Z" fill="#6a6a8c"/>
 <path d="M13 8 L16 6 V28 L13 30 Z" fill="#9a9abc"/><path d="M16 6 L19 8 V27 L16 28Z" fill="#6a6a8c"/>
 <path d="M13 16 L19 11 V14 H28 V18 H19 V21 Z" fill="#f5a06a" stroke="#e8803a" stroke-width="0.6"/>
</svg>
<div class="a" style="left:523px;top:103px;font-size:12px;color:#333">Apply</div>
<svg class="a" style="left:565px;top:69px" width="34" height="34" viewBox="0 0 34 34">
 <path d="M2 26 L10 21 L19 26 L11 31 Z" fill="#d6e04a" stroke="#b8c030" stroke-width="0.8"/>
 <path d="M7 5 L10 3 V25 L7 27 Z" fill="#8e8eb0"/><path d="M10 3 L13 5 V26 L10 25Z" fill="#6a6a8c"/>
 <path d="M13 8 L16 6 V28 L13 30 Z" fill="#9a9abc"/><path d="M16 6 L19 8 V27 L16 28Z" fill="#6a6a8c"/>
 <path d="M31 16 L25 11 V14 H16 V18 H25 V21 Z" fill="#f5a06a" stroke="#e8803a" stroke-width="0.6"/>
</svg>
<div class="a" style="left:561px;top:103px;font-size:12px;color:#333">Create</div>
<svg class="a" style="left:606px;top:69px" width="34" height="34" viewBox="0 0 34 34">
 <path d="M8 26 L16 21 L25 26 L17 31 Z" fill="#d6e04a" stroke="#b8c030" stroke-width="0.8"/>
 <path d="M13 8 L16 6 V25 L13 27 Z" fill="#8e8eb0"/><path d="M16 6 L19 8 V26 L16 25Z" fill="#6a6a8c"/>
 <path d="M19 10 L22 8 V28 L19 30 Z" fill="#9a9abc"/><path d="M22 8 L25 10 V27 L22 28Z" fill="#6a6a8c"/>
 <rect x="2" y="2" width="18" height="12" fill="#d8d8d8" stroke="#999" stroke-width="0.6"/>
 <path d="M2 6 H20 M2 10 H20 M8 2 V14 M14 2 V14" stroke="#999" stroke-width="0.6"/>
 <rect x="2" y="1" width="18" height="1.5" fill="#7070e0"/>
</svg>
<div class="a" style="left:600px;top:103px;font-size:12px;color:#333">Manager</div>
<div class="a glabel" style="left:561px;top:137px;color:#999;font-size:12px">Template</div>
<div class="a" style="left:654px;top:63px;width:1px;height:90px;background:#c6c6c6"></div>

<!-- cbfem -->
<svg class="a" style="left:663px;top:70px" width="34" height="32" viewBox="0 0 34 32">
 <path d="M7.28 2.39 A6.5 6.5 0 0 1 15.13 11.75 L28 24.5 L25.5 27 L12.75 14.13 A6.5 6.5 0 0 1 3.39 6.28 L7.2 7.4 Z" fill="none" stroke="#555" stroke-width="2" stroke-linejoin="round"/>
</svg>
<div class="a" style="left:666px;top:104px;font-size:12px;color:#333;text-align:center;line-height:12px;width:28px">Code<br>setup</div>
<svg class="a" style="left:710px;top:70px" width="32" height="32" viewBox="0 0 32 32">
 <path d="M3 1 V30 M29 1 V30 M1 30 H6 M26 30 H31 M3 5 H29 M3 14 H29 M3 23 H29" stroke="#111" stroke-width="2"/>
 <circle cx="9" cy="5" r="2.2" fill="#111"/><circle cx="15.5" cy="5" r="2.2" fill="#f26f22"/><circle cx="22" cy="5" r="2.2" fill="#111"/>
 <circle cx="15.5" cy="14" r="2.2" fill="#111"/><circle cx="21" cy="14" r="2.2" fill="#f26f22"/>
 <circle cx="10" cy="23" r="2.2" fill="#f26f22"/><circle cx="15.5" cy="23" r="2.2" fill="#111"/><circle cx="21.5" cy="23" r="2.2" fill="#f26f22"/>
</svg>
<div class="a" style="left:702px;top:103px;font-size:12px;color:#333">Calculate</div>
<svg class="a" style="left:758px;top:70px" width="34" height="32" viewBox="0 0 34 32">
 <path d="M2 3 L8 1 V30 L2 27 Z" fill="#d98a8a"/><path d="M8 1 L10 3 V29 L8 30 Z" fill="#b06060"/>
 <path d="M10 6 L14 3 V30 L10 27 Z" fill="#c8a080" opacity="0.8"/>
 <path d="M14 4 L28 7 V12 L14 10 Z" fill="#c8c8c8"/><path d="M14 10 L28 12 V22 L14 24 Z" fill="#a8d890"/>
</svg>
<div class="a" style="left:756px;top:104px;font-size:12px;color:#aaa;text-align:center;line-height:12px;width:40px">Overall<br>check</div>
<div class="a glabel" style="left:710px;top:137px;color:#999;font-size:12px">CBFEM</div>
<div class="a" style="left:801px;top:63px;width:1px;height:90px;background:#c6c6c6"></div>

<!-- options -->
<svg class="a" style="left:825px;top:70px" width="32" height="32" viewBox="0 0 32 32">
 <path d="M16 1 V28 M9 29 H23 M3 6 H29" stroke="#555" stroke-width="2.2"/>
 <path d="M6 7 L2 17 H10 Z M26 7 L22 17 H30 Z" fill="none" stroke="#555" stroke-width="1.2"/>
 <path d="M2 17 Q6 21 10 17 M22 17 Q26 21 30 17" fill="#555" stroke="#555"/>
</svg>
<div class="a" style="left:812px;top:104px;font-size:12px;color:#333;text-align:center;line-height:12px;width:60px">Loads in<br>equilibrium</div>
<div class="a glabel" style="left:819px;top:137px;color:#999;font-size:12px">Options</div>
<div class="a" style="left:879px;top:63px;width:1px;height:90px;background:#c6c6c6"></div>

<!-- import/export -->
<svg class="a" style="left:891px;top:70px" width="32" height="32" viewBox="0 0 32 32">
 <path d="M1 4 L17 1 V31 L1 28 Z" fill="#555"/>
 <rect x="17" y="5" width="14" height="22" fill="#f4f4f4" stroke="#555" stroke-width="1.2"/>
 <path d="M17 10 H31 M17 15 H31 M17 20 H31 M24 5 V27" stroke="#555" stroke-width="1"/>
 <text x="4" y="21.5" font-family="Liberation Sans" font-weight="bold" font-size="13" fill="#fff">X</text>
</svg>
<div class="a" style="left:892px;top:104px;font-size:12px;color:#333;text-align:center;line-height:12px;width:30px">XLS<br>Import</div>
<svg class="a" style="left:946px;top:76px" width="32" height="20" viewBox="0 0 32 20">
 <path d="M1 2 L8 1 L16 8 L24 1 L31 2 L22 10 V14 H10 V10 Z" fill="#555"/><rect x="1" y="10" width="30" height="7" fill="#555"/>
</svg>
<div class="a" style="left:929px;top:104px;font-size:12px;color:#333;text-align:center;line-height:12px;width:66px">Connection<br>Import</div>
<svg class="a" style="left:1000px;top:70px" width="32" height="32" viewBox="0 0 32 32">
 <path d="M1 4 L17 1 V31 L1 28 Z" fill="#f4f4f4" stroke="#555" stroke-width="1.2"/>
 <rect x="17" y="5" width="14" height="22" fill="#f4f4f4" stroke="#555" stroke-width="1.2"/>
 <path d="M17 10 H31 M17 15 H31 M17 20 H31 M24 5 V27" stroke="#555" stroke-width="1"/>
 <text x="4" y="21.5" font-family="Liberation Sans" font-weight="bold" font-size="13" fill="#555">X</text>
</svg>
<div class="a" style="left:1000px;top:104px;font-size:12px;color:#333;text-align:center;line-height:12px;width:32px">XLS<br>Export</div>
<div class="a glabel" style="left:908px;top:137px;color:#999;font-size:12px">Import/Export loads</div>
<div class="a" style="left:1039px;top:63px;width:1px;height:90px;background:#c6c6c6"></div>

<!-- new -->
<svg class="a" style="left:1052px;top:69px" width="36" height="34" viewBox="0 0 36 34">
 <path d="M2 8 H17 M9.5 1 V15" stroke="#5e98de" stroke-width="4"/>
 <path d="M3 26 L27 15 L30 16 V20 L6 30 H3 Z" fill="#f4f4f4" stroke="#222" stroke-width="1.1"/>
 <path d="M3 26 H6 V30 M6 26 L30 16" fill="none" stroke="#222" stroke-width="1.1"/>
</svg>
<div class="a" style="left:1049px;top:103px;font-size:12px;color:#333">Member</div>
<svg class="a" style="left:1098px;top:69px" width="34" height="34" viewBox="0 0 34 34">
 <path d="M2 8 H17 M9.5 1 V15" stroke="#5e98de" stroke-width="4"/>
 <path d="M8 14 V27 M17 14 V27 M26 14 V27 M5 23 L8 28 L11 23 M14 23 L17 28 L20 23 M23 23 L26 28 L29 23" fill="none" stroke="#111" stroke-width="1.3"/>
</svg>
<div class="a" style="left:1102px;top:103px;font-size:12px;color:#333">Load</div>
<svg class="a" style="left:1146px;top:69px" width="36" height="34" viewBox="0 0 36 34">
 <path d="M2 8 H17 M9.5 1 V15" stroke="#5e98de" stroke-width="4"/>
 <path d="M13 28 L33 8 M13 31 L33 19" stroke="#999" stroke-width="2.6"/><path d="M13 28 L33 8 M13 31 L33 19" stroke="#f4f4f4" stroke-width="1"/>
 <path d="M8 19 V28 H18" fill="none" stroke="#111" stroke-width="1.3"/>
</svg>
<div class="a" style="left:1139px;top:103px;font-size:12px;color:#333">Operation</div>
<div class="a glabel" style="left:1108px;top:137px;color:#999;font-size:12px">New</div>
<div class="a" style="left:1198px;top:63px;width:1px;height:90px;background:#c6c6c6"></div>

<!--SCENE-->
<svg id="scene" class="a" style="left:0;top:0" width="1195" height="1047" viewBox="0 0 1195 1047">
<path d="M149 290 L338 334" stroke="#b4d0f0" stroke-width="1" stroke-dasharray="8 3 2 3" fill="none"/>
<path d="M566 535 L681 567 L681 684.4 L566 650 Z" fill="#964f24" stroke="#f5701e" stroke-width="1"/>
<path d="M681 567 L686 565 L686 679.4 L681 684.4 Z" fill="#3d2414" stroke="#f5701e" stroke-width="0.8"/>
<path d="M312.7 467.3 L386.5 423.3 L976.1 568.7 L923.6 631.7 Z" fill="#5e728a"/>
<path d="M312.7 467.3 L923.6 631.7 L922.4 642.8 L313.3 477 Z" fill="#647891"/>
<path d="M923.6 631.7 L976.1 568.7 L975.3 578.9 L922.4 642.8 Z" fill="#2f3540"/>
<path d="M335 246.5 L980 336 L949.4 602 L349.6 445.3 Z" fill="#657993"/>
<path d="M980 336 L983 336 L952 602 L949.4 602 Z" fill="#7c90a8" stroke="#a9cdf5" stroke-width="0.8"/>
<path d="M312.7 467.3 L349.6 445.3 L949.4 602 L923.6 631.7 Z" fill="#5e728a"/>
<path d="M976.1 568.7 L956.5 564 L951.5 585 Z" fill="#5e728a"/>
<path d="M373.9 190.6 L1007.7 306.6 L952.6 356.5 L292.8 228.9 Z" fill="#5f7590"/>
<path d="M292.8 228.9 L952.6 356.5 L951.3 370.1 L292.8 237.2 Z" fill="#647891"/>
<path d="M952.6 356.5 L1007.7 306.6 L1006.4 318.9 L951.3 370.1 Z" fill="#2f3540"/>
<g fill="none" stroke="#a9cdf5" stroke-width="1">
<path d="M292.8 228.9 L373.9 190.6 L1007.7 306.6 L952.6 356.5 L292.8 228.9 L292.8 237.2 L951.3 370.1 L952.6 356.5 M951.3 370.1 L1006.4 318.9 L1007.7 306.6"/>
<path d="M335 246.5 L349.6 445.3"/>
<path d="M312.7 467.3 L349.6 445.3 M312.7 467.3 L923.6 631.7 L976.1 568.7 L975.3 578.9 L922.4 642.8 L313.3 477 L312.7 467.3 M923.6 631.7 L922.4 642.8 M956.5 564 L976.1 568.7"/>
</g>
<!--SCENE_MORE-->
<path d="M647.8 676 L657.8 678.5 L657.8 765 L647.8 763 Z" fill="#964f24" stroke="#f5701e" stroke-width="0.8"/>
<path d="M653.5 677.5 L657.8 678.5 L657.8 765 L653.5 764 Z" fill="#3d2414"/>
<path d="M591.5 585 L643 599.5 L643 762 L591.5 744 Z" fill="#964f24" stroke="#f5701e" stroke-width="1"/>
<path d="M591.5 585 L597 580 L648 594.5 L643 599.5 Z" fill="#8a4a22" stroke="#f5701e" stroke-width="1"/>
<path d="M643 599.5 L648 594.5 L648 763 L643 766 Z" fill="#3d2414" stroke="#f5701e" stroke-width="0.8"/>
<circle cx="616.7" cy="614.7" r="17.5" fill="#3a3010" stroke="#f0d020" stroke-width="1"/>
<circle cx="616.7" cy="614.7" r="15" fill="none" stroke="#f0d020" stroke-width="0.7"/>
<path d="M616.7 610.3 L621.5 605 L629.9 620.3 L623.3 625.6 Z" fill="#2a2410" stroke="#f0d020" stroke-width="0.9"/>
<path d="M602.1 606.4 L606.9 600.8 L621.5 605 L616.7 610.3 Z" fill="#4e4212" stroke="#f0d020" stroke-width="0.9"/>
<path d="M593.75 616.8 L602.1 606.4 L616.7 610.3 L623.3 625.6 L615.3 636.3 L600.7 632.5 Z" fill="#554815" stroke="#f0d020" stroke-width="1"/>
<defs><linearGradient id="cyl" x1="0" x2="1"><stop offset="0" stop-color="#7898c4"/><stop offset="0.35" stop-color="#5c7090"/><stop offset="0.6" stop-color="#384458"/><stop offset="0.75" stop-color="#181a1e"/><stop offset="0.9" stop-color="#202428"/><stop offset="1" stop-color="#6888b0"/></linearGradient><pattern id="stripes" width="4.4" height="10" patternUnits="userSpaceOnUse"><rect width="2" height="10" fill="rgba(20,30,50,0.55)"/></pattern><linearGradient id="disc" x1="0" x2="1"><stop offset="0" stop-color="#b05a28"/><stop offset="0.5" stop-color="#7a3c18"/><stop offset="0.75" stop-color="#1a0e08"/><stop offset="1" stop-color="#6a3818"/></linearGradient></defs>
<path d="M593.8 785 L654.4 785 L654.4 857 A30.3 17 0 0 1 593.8 857 Z" fill="url(#cyl)" stroke="#9ec4f0" stroke-width="1"/>
<path d="M594.5 785 V860.5 M596.4 785 V863.9 M599.6 785 V867.0 M603.8 785 V869.6 M609.0 785 V871.7 M614.7 785 V873.2 M620.9 785 V873.9 M627.3 785 V873.9 M633.5 785 V873.2 M639.2 785 V871.7 M644.4 785 V869.6 M648.6 785 V867.0 M651.8 785 V863.9 M653.7 785 V860.5" stroke="#9ec4f0" stroke-width="0.9" fill="none"/>
<path d="M568.9 751.5 L568.9 760.5 A55.7 30.8 0 0 0 680.3 760.5 L680.3 751.5 Z" fill="url(#disc)" stroke="#f5701e" stroke-width="0.8"/>
<ellipse cx="624.6" cy="751.5" rx="55.7" ry="30.8" fill="#964f24" stroke="#f5701e" stroke-width="1"/>
<path d="M591.5 700 L643 712 L643 762 L591.5 744 Z" fill="#964f24"/>
<path d="M591.5 700 L591.5 744 M643 712 L643 762" stroke="#f5701e" stroke-width="1"/>
<path d="M643 712 L648 710 L648 763 L643 766 Z" fill="#3d2414"/><path d="M648 700 V763" stroke="#f5701e" stroke-width="0.8"/>
<path d="M647.8 705 L657.8 707 L657.8 765 L647.8 763 Z" fill="#964f24"/><path d="M653.5 706 L657.8 707 L657.8 765 L653.5 764 Z" fill="#3d2414"/><path d="M648 700 V763 M653.2 700 V764 M657.8 700 V765 L647.8 763" fill="none" stroke="#f5701e" stroke-width="0.8"/>
<path d="M591.7 743.9 L642.8 760.6 L638.9 770.6 L587.4 753.9 Z" fill="#ffe43a" stroke="#f0c800" stroke-width="0.7"/>
<path d="M642.8 760.6 L647.5 762 L641.5 769.5 L638.9 770.6 Z" fill="#e8c820" stroke="#f0c800" stroke-width="0.6"/>
<path d="M647.8 748.5 L652.8 750 L652.8 761 L647.8 763 Z" fill="#ffe43a"/>
<path d="M657.2 744.4 L661 747.2 L657.5 750" fill="none" stroke="#f0d020" stroke-width="0.8"/>
<rect x="390" y="360" width="21" height="18" fill="#fff"/><text x="392.5" y="373.5" font-family="Liberation Sans" font-size="12" fill="#111">B1</text>
<rect x="608" y="686" width="22" height="18" fill="#fff"/><text x="610.5" y="700" font-family="Liberation Sans" font-size="12" fill="#111">B2</text>
<g stroke="#333" stroke-width="0.8" fill="none">
<path d="M463 615.6 L552.6 642.5"/>
<path d="M480 523 L483 621.5"/>
<path d="M702.7 606.2 L861.2 650.2 M702.7 627 L860 672.1 M716.6 748.5 L813.8 779.7 M698.1 774 L846.2 822.5 M664 804 L765.2 839.9"/>
<path d="M783.7 605 L783.7 674.5 M809.2 636.3 L797.6 806.3 M836.9 620 L821.9 814.4 M790.6 771.6 L740.9 830.6"/>
</g>
<g fill="#111">
<path d="M483 621.5 L478.2 600.7 L487.4 600.7 Z"/>
<path d="M784 625 L779.5 605 L789.5 605 Z M782.5 649 L776.5 675 L787 675 Z"/>
<path d="M809.2 636.3 L803.3 660.6 L814.3 660.6 Z M797.6 806.3 L792.4 783.2 L803.5 783.2 Z"/>
<path d="M821.9 814.4 L816.8 791.3 L827.9 791.3 Z"/>
<path d="M790.6 771.6 L775.6 784.4 L784.9 787.8 Z M740.9 830.6 L746.7 817.9 L757.1 821.4 Z"/>
</g>
<rect x="481" y="541" width="23" height="15" fill="#e8e8e8"/><text x="492.5" y="553" text-anchor="middle" font-family="Liberation Sans" font-size="11" fill="#111">120</text>
<rect x="783.5" y="624.5" width="16.5" height="15.5" fill="#e8e8e8"/><text x="791.75" y="637" text-anchor="middle" font-family="Liberation Sans" font-size="11" fill="#111">18</text>
<rect x="804.5" y="709" width="21.0" height="15" fill="#e8e8e8"/><text x="815.0" y="721" text-anchor="middle" font-family="Liberation Sans" font-size="11" fill="#111">150</text>
<rect x="835.5" y="628.5" width="21.5" height="15.5" fill="#e8e8e8"/><text x="846.25" y="641" text-anchor="middle" font-family="Liberation Sans" font-size="11" fill="#111">300</text>
<rect x="766" y="787" width="16.5" height="14" fill="#e8e8e8"/><text x="774.25" y="798" text-anchor="middle" font-family="Liberation Sans" font-size="11" fill="#111">88</text>
<path d="M622 880 L622 1040" stroke="#b8cce0" stroke-width="1" stroke-dasharray="7 3 2 3"/>
<defs><linearGradient id="arr" x1="0" x2="1"><stop offset="0" stop-color="#777"/><stop offset="0.3" stop-color="#bbb"/><stop offset="0.6" stop-color="#333"/><stop offset="1" stop-color="#111"/></linearGradient><linearGradient id="cone" x1="0" x2="1"><stop offset="0" stop-color="#999"/><stop offset="0.45" stop-color="#333"/><stop offset="1" stop-color="#222"/></linearGradient></defs>
<rect x="618.5" y="940" width="8.7" height="63" fill="url(#arr)"/>
<ellipse cx="622.8" cy="940.5" rx="4.3" ry="2" fill="#888" stroke="#eee" stroke-width="0.6"/>
<path d="M612.5 1008 L633 1008 L622.5 1029 Z" fill="url(#cone)"/>
<ellipse cx="622.5" cy="1003.5" rx="11" ry="6" fill="#8a8a8a" stroke="#ddd" stroke-width="0.8"/>
<path d="M618.5 990 V1003 A4.3 2 0 0 0 627.2 1003 V990 Z" fill="url(#arr)"/><path d="M618.5 1003 A4.3 2 0 0 0 627.2 1003" fill="none" stroke="#fff" stroke-width="0.8"/>
</svg>
<!--/SCENE-->
<div id="toolbar" class="a"></div>
<div id="split" class="a"></div>
<div id="phead" class="a"></div>
<!--PANEL-->
<div id="panel">
<div class="a" style="left:1210px;top:165px;font-size:11px;font-weight:bold;color:#fff;line-height:11px">CPL1</div>
<div class="a" style="left:1248px;top:163px;font-size:12px;color:#fff;line-height:13px">[Connecting plate]</div>
<div class="a" style="left:1713px;top:163px;font-size:12px;font-weight:bold;color:#fff;line-height:13px;letter-spacing:-0.2px">Editor</div>
<svg class="a" style="left:1753px;top:168px" width="6" height="4"><path d="M0 0H6L3 4Z" fill="#fff"/></svg>
<div class="a" style="left:1774px;top:163px;font-size:12px;font-weight:bold;color:#fff;line-height:13px;letter-spacing:-0.2px">Copy</div>
<div class="a" style="left:1811px;top:163px;font-size:12px;font-weight:bold;color:#fff;line-height:13px;letter-spacing:-0.2px">Delete</div>
<div class="a" style="left:1832px;top:190px;width:17px;height:846px;background:#f0f0f0"></div>
<div class="a" style="left:1832px;top:276px;width:17px;height:744px;background:#c8c8c8"></div>
<svg class="a" style="left:1836px;top:196px" width="9" height="6"><path d="M1 5 L4.5 1.5 L8 5" fill="none" stroke="#aaa" stroke-width="1"/></svg>
<svg class="a" style="left:1836px;top:1026px" width="9" height="6"><path d="M1 1 L4.5 4.5 L8 1" fill="none" stroke="#aaa" stroke-width="1"/></svg>
<svg class="a" style="left:1218px;top:201px" width="11" height="8"><path d="M0 0H10L5 7Z" fill="#f26f22"/></svg>
<div class="a sec" style="left:1245px;top:197px">New gusset plate</div>
<div class="a lab" style="left:1245px;top:226px">Related to</div>
<div class="a dd" style="left:1438px;top:220px;width:293px;height:24px;line-height:24px">B1</div>
<svg class="a" style="left:1718px;top:230px" width="8" height="5"><path d="M0 0H8L4 5Z" fill="#111"/></svg>
<div class="a" style="left:1736px;top:222px;width:20px;height:20px;"><svg class="a" style="left:0;top:0" width="20" height="20"><path d="M3.5 3.5L16.5 16.5M16.5 3.5L3.5 16.5" stroke="#7a7a7a" stroke-width="4.6"/></svg></div>
<div class="a" style="left:1761px;top:222px;width:20px;height:20px;background:#f26f22;"><svg class="a" style="left:0;top:0" width="20" height="20"><rect x="3" y="4" width="14" height="3" fill="#222"/><rect x="3" y="13" width="14" height="3" fill="#222"/><rect x="3" y="7" width="14" height="6" fill="#f26f22"/><path d="M3 4V8L1 10L3 11V16M17 4V8L19 10L17 11V16" fill="none" stroke="#222" stroke-width="0.8"/></svg></div>
<svg class="a" style="left:1789px;top:223px" width="13" height="17"><rect x="1" y="1" width="11" height="15" fill="#fff" stroke="#555" stroke-width="1"/><path d="M2.5 3h1.5M9 3h1.5M2.5 14h1.5M9 14h1.5" stroke="#333" stroke-width="1.2"/></svg>
<div class="a gb" style="left:1808px;top:220px;width:22px;height:24px"><svg class="a" style="left:6px;top:5px" width="12" height="16"><path d="M1 1 L1 13 L4 10 L6.5 15 L8.5 14 L6 9 L10.5 9 Z" fill="#fff"/></svg></div>
<div class="a lab" style="left:1245px;top:252px">Related also to</div>
<div class="a dd" style="left:1438px;top:246px;width:293px;height:24px;line-height:24px"></div>
<svg class="a" style="left:1718px;top:256px" width="8" height="5"><path d="M0 0H8L4 5Z" fill="#111"/></svg>
<div class="a" style="left:1736px;top:248px;width:20px;height:20px;background:#f26f22;"><svg class="a" style="left:0;top:0" width="20" height="20"><path d="M3.5 3.5L16.5 16.5M16.5 3.5L3.5 16.5" stroke="#7a7a7a" stroke-width="4.6"/></svg></div>
<div class="a" style="left:1761px;top:248px;width:20px;height:20px;"><svg class="a" style="left:0;top:0" width="20" height="20"><rect x="3" y="4" width="14" height="3" fill="#222"/><rect x="3" y="13" width="14" height="3" fill="#222"/><rect x="3" y="7" width="14" height="6" fill="#fff"/><path d="M3 4V8L1 10L3 11V16M17 4V8L19 10L17 11V16" fill="none" stroke="#222" stroke-width="0.8"/></svg></div>
<svg class="a" style="left:1789px;top:249px" width="13" height="17"><rect x="1" y="1" width="11" height="15" fill="#fff" stroke="#555" stroke-width="1"/><path d="M2.5 3h1.5M9 3h1.5M2.5 14h1.5M9 14h1.5" stroke="#333" stroke-width="1.2"/></svg>
<div class="a gb" style="left:1808px;top:246px;width:22px;height:24px"><svg class="a" style="left:6px;top:5px" width="12" height="16"><path d="M1 1 L1 13 L4 10 L6.5 15 L8.5 14 L6 9 L10.5 9 Z" fill="#fff"/></svg></div>
<div class="a lab" style="left:1245px;top:278px">Material</div>
<div class="a dd" style="left:1439px;top:272px;width:366px;height:22px;line-height:22px">&lt; default &gt;</div>
<svg class="a" style="left:1792px;top:281px" width="8" height="5"><path d="M0 0H8L4 5Z" fill="#111"/></svg>
<div class="a gb" style="left:1808px;top:272px;width:22px;height:22px"><svg class="a" style="left:3px;top:3px" width="16" height="16"><path d="M8 1V15M1 8H15" stroke="#fff" stroke-width="3"/></svg></div>
<div class="a lab" style="left:1245px;top:302px">Thickness [mm]</div>
<div class="a inp" style="left:1440px;top:296px;width:340px;height:22px;line-height:22px">0.0</div>
<div class="a gb" style="left:1783px;top:296px;width:22px;height:22px"><svg class="a" style="left:7px;top:4px" width="8" height="14"><path d="M1 5 L4 1 L7 5Z M1 9 L4 13 L7 9Z" fill="#fff"/></svg></div>
<div class="a gb" style="left:1808px;top:296px;width:22px;height:22px"><svg class="a" style="left:6px;top:13px" width="10" height="3"><path d="M0.5 0.5h2v2h-2zM4 0.5h2v2h-2zM7.5 0.5h2v2h-2z" fill="#fff"/></svg></div>
<div class="a lab" style="left:1245px;top:326px">Width [mm]</div>
<div class="a inp" style="left:1438px;top:320px;width:392px;height:22px;line-height:22px">100</div>
<div class="a lab" style="left:1245px;top:350px">Depth [mm]</div>
<div class="a inp" style="left:1438px;top:344px;width:392px;height:22px;line-height:22px">120</div>
<div class="a lab" style="left:1245px;top:374px">X – position [mm]</div>
<div class="a inp" style="left:1438px;top:368px;width:392px;height:22px;line-height:22px">0</div>
<svg class="a" style="left:1218px;top:402px" width="11" height="8"><path d="M0 0H10L5 7Z" fill="#f26f22"/></svg>
<div class="a sec" style="left:1245px;top:398px">Connection</div>
<div class="a lab" style="left:1245px;top:427px">X - position [mm]</div>
<div class="a inp" style="left:1438px;top:422px;width:392px;height:21px;line-height:21px">300</div>
<div class="a lab" style="left:1245px;top:451px">Material</div>
<div class="a dd" style="left:1439px;top:445px;width:366px;height:22px;line-height:22px">&lt; default &gt;</div>
<svg class="a" style="left:1792px;top:454px" width="8" height="5"><path d="M0 0H8L4 5Z" fill="#111"/></svg>
<div class="a gb" style="left:1808px;top:445px;width:22px;height:22px"><svg class="a" style="left:3px;top:3px" width="16" height="16"><path d="M8 1V15M1 8H15" stroke="#fff" stroke-width="3"/></svg></div>
<div class="a lab" style="left:1245px;top:475px">Thickness [mm]</div>
<div class="a inp" style="left:1440px;top:469px;width:340px;height:22px;line-height:22px">0.0</div>
<div class="a gb" style="left:1783px;top:469px;width:22px;height:22px"><svg class="a" style="left:7px;top:4px" width="8" height="14"><path d="M1 5 L4 1 L7 5Z M1 9 L4 13 L7 9Z" fill="#fff"/></svg></div>
<div class="a gb" style="left:1808px;top:469px;width:22px;height:22px"><svg class="a" style="left:6px;top:13px" width="10" height="3"><path d="M0.5 0.5h2v2h-2zM4 0.5h2v2h-2zM7.5 0.5h2v2h-2z" fill="#fff"/></svg></div>
<div class="a lab" style="left:1245px;top:498px">Alignment</div>
<div class="a dd" style="left:1439px;top:493px;width:391px;height:21px;line-height:21px">Front</div>
<svg class="a" style="left:1817px;top:501px" width="8" height="5"><path d="M0 0H8L4 5Z" fill="#111"/></svg>
<div class="a lab" style="left:1245px;top:521px">Type</div>
<div class="a dd" style="left:1439px;top:516px;width:391px;height:21px;line-height:21px">Cap plate 2x</div>
<svg class="a" style="left:1817px;top:524px" width="8" height="5"><path d="M0 0H8L4 5Z" fill="#111"/></svg>
<div class="a lab" style="left:1245px;top:545px">Plate length [mm]</div>
<div class="a inp" style="left:1438px;top:539px;width:392px;height:22px;line-height:22px">150</div>
<div class="a lab" style="left:1245px;top:569px">Plate width [mm]</div>
<div class="a inp" style="left:1438px;top:563px;width:392px;height:22px;line-height:22px">0</div>
<div class="a lab" style="left:1245px;top:593px">Plate excentricity [mm]</div>
<div class="a inp" style="left:1438px;top:587px;width:392px;height:22px;line-height:22px">0</div>
<div class="a lab" style="left:1245px;top:617px">Thickness of cap [mm]</div>
<div class="a inp" style="left:1440px;top:611px;width:340px;height:22px;line-height:22px">0.0</div>
<div class="a gb" style="left:1783px;top:611px;width:22px;height:22px"><svg class="a" style="left:7px;top:4px" width="8" height="14"><path d="M1 5 L4 1 L7 5Z M1 9 L4 13 L7 9Z" fill="#fff"/></svg></div>
<div class="a gb" style="left:1808px;top:611px;width:22px;height:22px"><svg class="a" style="left:6px;top:13px" width="10" height="3"><path d="M0.5 0.5h2v2h-2zM4 0.5h2v2h-2zM7.5 0.5h2v2h-2z" fill="#fff"/></svg></div>
<div class="a lab" style="left:1245px;top:641px"><span style="letter-spacing:-0.25px">Cap plate offset (LL RR TT BB) [mm]</span></div>
<div class="a inp" style="left:1438px;top:635px;width:392px;height:22px;line-height:22px">20</div>
<div class="a lab" style="left:1245px;top:664px">Cap plate shape</div>
<div class="a dd" style="left:1439px;top:659px;width:391px;height:21px;line-height:21px">Circle</div>
<svg class="a" style="left:1817px;top:667px" width="8" height="5"><path d="M0 0H8L4 5Z" fill="#111"/></svg>
<div class="a lab" style="left:1245px;top:687px">Connection type</div>
<div class="a dd" style="left:1439px;top:682px;width:391px;height:21px;line-height:21px">Bolted</div>
<svg class="a" style="left:1817px;top:690px" width="8" height="5"><path d="M0 0H8L4 5Z" fill="#111"/></svg>
<svg class="a" style="left:1218px;top:715px" width="11" height="8"><path d="M0 0H10L5 7Z" fill="#f26f22"/></svg>
<div class="a sec" style="left:1245px;top:711px">Welds</div>
<div class="a lab" style="left:1245px;top:740px">Plate [mm]</div>
<div class="a" style="left:1438px;top:736px;font-size:11px;color:#555;line-height:12px">0.0</div>
<div class="a gb" style="left:1465px;top:734px;width:22px;height:22px"><svg class="a" style="left:7px;top:4px" width="8" height="14"><path d="M1 5 L4 1 L7 5Z M1 9 L4 13 L7 9Z" fill="#fff"/></svg></div>
<div class="a dd" style="left:1489px;top:734px;width:216px;height:22px;line-height:22px">&lt; default &gt;</div>
<svg class="a" style="left:1692px;top:743px" width="8" height="5"><path d="M0 0H8L4 5Z" fill="#111"/></svg>
<div class="a" style="left:1709px;top:735px;width:20px;height:20px;"><svg class="a" style="left:0;top:0" width="20" height="20"><path d="M2.5 14 L8 8 V14Z" fill="#000"/><rect x="8" y="2" width="3.5" height="12" fill="#fff" stroke="#333" stroke-width="0.7"/><rect x="2" y="14.5" width="15.5" height="3.5" fill="#fff" stroke="#333" stroke-width="0.7"/></svg></div>
<div class="a" style="left:1734px;top:735px;width:20px;height:20px;"><svg class="a" style="left:0;top:0" width="20" height="20"><path d="M17.5 14 L12 8 V14Z" fill="#000"/><rect x="8" y="2" width="3.5" height="12" fill="#fff" stroke="#333" stroke-width="0.7"/><rect x="2" y="14.5" width="15.5" height="3.5" fill="#fff" stroke="#333" stroke-width="0.7"/></svg></div>
<div class="a" style="left:1759px;top:735px;width:20px;height:20px;background:#f26f22;"><svg class="a" style="left:0;top:0" width="20" height="20"><path d="M2.5 14 L8 8 V14Z" fill="#000"/><path d="M17.5 14 L12 8 V14Z" fill="#000"/><rect x="8" y="2" width="3.5" height="12" fill="#fff" stroke="#333" stroke-width="0.7"/><rect x="2" y="14.5" width="15.5" height="3.5" fill="#fff" stroke="#333" stroke-width="0.7"/></svg></div>
<div class="a" style="left:1784px;top:735px;width:20px;height:20px;"><svg class="a" style="left:0;top:0" width="20" height="20"><rect x="8" y="2" width="3.5" height="12" fill="#fff" stroke="#333" stroke-width="0.7"/><rect x="2" y="14.5" width="15.5" height="3.5" fill="#fff" stroke="#333" stroke-width="0.7"/><path d="M8.3 14 L11.2 10.5 V14Z" fill="#000"/></svg></div>
<div class="a" style="left:1809px;top:735px;width:20px;height:20px;"><svg class="a" style="left:0;top:0" width="20" height="20"><rect x="8" y="2" width="3.5" height="12" fill="#fff" stroke="#333" stroke-width="0.7"/><rect x="2" y="14.5" width="15.5" height="3.5" fill="#fff" stroke="#333" stroke-width="0.7"/></svg></div>
<div class="a lab" style="left:1245px;top:764px">Cap plate [mm]</div>
<div class="a" style="left:1438px;top:760px;font-size:11px;color:#555;line-height:12px">0.0</div>
<div class="a gb" style="left:1465px;top:758px;width:22px;height:22px"><svg class="a" style="left:7px;top:4px" width="8" height="14"><path d="M1 5 L4 1 L7 5Z M1 9 L4 13 L7 9Z" fill="#fff"/></svg></div>
<div class="a dd" style="left:1489px;top:758px;width:216px;height:22px;line-height:22px">&lt; default &gt;</div>
<svg class="a" style="left:1692px;top:767px" width="8" height="5"><path d="M0 0H8L4 5Z" fill="#111"/></svg>
<div class="a" style="left:1709px;top:759px;width:20px;height:20px;background:#f26f22;"><svg class="a" style="left:0;top:0" width="20" height="20"><path d="M2.5 14 L8 8 V14Z" fill="#000"/><rect x="8" y="2" width="3.5" height="12" fill="#fff" stroke="#333" stroke-width="0.7"/><rect x="2" y="14.5" width="15.5" height="3.5" fill="#fff" stroke="#333" stroke-width="0.7"/></svg></div>
<div class="a" style="left:1734px;top:759px;width:20px;height:20px;"><svg class="a" style="left:0;top:0" width="20" height="20"><path d="M17.5 14 L12 8 V14Z" fill="#000"/><rect x="8" y="2" width="3.5" height="12" fill="#fff" stroke="#333" stroke-width="0.7"/><rect x="2" y="14.5" width="15.5" height="3.5" fill="#fff" stroke="#333" stroke-width="0.7"/></svg></div>
<div class="a" style="left:1759px;top:759px;width:20px;height:20px;"><svg class="a" style="left:0;top:0" width="20" height="20"><path d="M2.5 14 L8 8 V14Z" fill="#000"/><path d="M17.5 14 L12 8 V14Z" fill="#000"/><rect x="8" y="2" width="3.5" height="12" fill="#fff" stroke="#333" stroke-width="0.7"/><rect x="2" y="14.5" width="15.5" height="3.5" fill="#fff" stroke="#333" stroke-width="0.7"/></svg></div>
<div class="a" style="left:1784px;top:759px;width:20px;height:20px;"><svg class="a" style="left:0;top:0" width="20" height="20"><rect x="8" y="2" width="3.5" height="12" fill="#fff" stroke="#333" stroke-width="0.7"/><rect x="2" y="14.5" width="15.5" height="3.5" fill="#fff" stroke="#333" stroke-width="0.7"/><path d="M8.3 14 L11.2 10.5 V14Z" fill="#000"/></svg></div>
<div class="a" style="left:1809px;top:759px;width:20px;height:20px;"><svg class="a" style="left:0;top:0" width="20" height="20"><rect x="8" y="2" width="3.5" height="12" fill="#fff" stroke="#333" stroke-width="0.7"/><rect x="2" y="14.5" width="15.5" height="3.5" fill="#fff" stroke="#333" stroke-width="0.7"/></svg></div>
<div class="a lab" style="left:1245px;top:788px">Tongue [mm]</div>
<div class="a" style="left:1438px;top:784px;font-size:11px;color:#555;line-height:12px">0.0</div>
<div class="a gb" style="left:1465px;top:782px;width:22px;height:22px"><svg class="a" style="left:7px;top:4px" width="8" height="14"><path d="M1 5 L4 1 L7 5Z M1 9 L4 13 L7 9Z" fill="#fff"/></svg></div>
<div class="a dd" style="left:1489px;top:782px;width:216px;height:22px;line-height:22px">&lt; default &gt;</div>
<svg class="a" style="left:1692px;top:791px" width="8" height="5"><path d="M0 0H8L4 5Z" fill="#111"/></svg>
<div class="a" style="left:1709px;top:783px;width:20px;height:20px;"><svg class="a" style="left:0;top:0" width="20" height="20"><path d="M2.5 14 L8 8 V14Z" fill="#000"/><rect x="8" y="2" width="3.5" height="12" fill="#fff" stroke="#333" stroke-width="0.7"/><rect x="2" y="14.5" width="15.5" height="3.5" fill="#fff" stroke="#333" stroke-width="0.7"/></svg></div>
<div class="a" style="left:1734px;top:783px;width:20px;height:20px;"><svg class="a" style="left:0;top:0" width="20" height="20"><path d="M17.5 14 L12 8 V14Z" fill="#000"/><rect x="8" y="2" width="3.5" height="12" fill="#fff" stroke="#333" stroke-width="0.7"/><rect x="2" y="14.5" width="15.5" height="3.5" fill="#fff" stroke="#333" stroke-width="0.7"/></svg></div>
<div class="a" style="left:1759px;top:783px;width:20px;height:20px;background:#f26f22;"><svg class="a" style="left:0;top:0" width="20" height="20"><path d="M2.5 14 L8 8 V14Z" fill="#000"/><path d="M17.5 14 L12 8 V14Z" fill="#000"/><rect x="8" y="2" width="3.5" height="12" fill="#fff" stroke="#333" stroke-width="0.7"/><rect x="2" y="14.5" width="15.5" height="3.5" fill="#fff" stroke="#333" stroke-width="0.7"/></svg></div>
<div class="a" style="left:1784px;top:783px;width:20px;height:20px;"><svg class="a" style="left:0;top:0" width="20" height="20"><rect x="8" y="2" width="3.5" height="12" fill="#fff" stroke="#333" stroke-width="0.7"/><rect x="2" y="14.5" width="15.5" height="3.5" fill="#fff" stroke="#333" stroke-width="0.7"/><path d="M8.3 14 L11.2 10.5 V14Z" fill="#000"/></svg></div>
<div class="a" style="left:1809px;top:783px;width:20px;height:20px;"><svg class="a" style="left:0;top:0" width="20" height="20"><rect x="8" y="2" width="3.5" height="12" fill="#fff" stroke="#333" stroke-width="0.7"/><rect x="2" y="14.5" width="15.5" height="3.5" fill="#fff" stroke="#333" stroke-width="0.7"/></svg></div>
<svg class="a" style="left:1218px;top:816px" width="11" height="8"><path d="M0 0H10L5 7Z" fill="#f26f22"/></svg>
<div class="a sec" style="left:1245px;top:812px">Bolts</div>
<div class="a lab" style="left:1245px;top:841px">Type</div>
<div class="a dd" style="left:1439px;top:835px;width:366px;height:22px;line-height:22px">M16 8.8</div>
<svg class="a" style="left:1792px;top:844px" width="8" height="5"><path d="M0 0H8L4 5Z" fill="#111"/></svg>
<div class="a gb" style="left:1808px;top:835px;width:22px;height:22px"><svg class="a" style="left:3px;top:3px" width="16" height="16"><path d="M8 1V15M1 8H15" stroke="#fff" stroke-width="3"/></svg></div>
<div class="a lab" style="left:1245px;top:864px">Reference line</div>
<div class="a dd" style="left:1439px;top:859px;width:391px;height:21px;line-height:21px">Member x-axis</div>
<svg class="a" style="left:1817px;top:867px" width="8" height="5"><path d="M0 0H8L4 5Z" fill="#111"/></svg>
<div class="a lab" style="left:1245px;top:888px">Rows [mm]</div>
<div class="a inp" style="left:1438px;top:882px;width:392px;height:22px;line-height:22px">0</div>
<div class="a lab" style="left:1245px;top:912px">Positions [mm]</div>
<div class="a inp" style="left:1438px;top:906px;width:392px;height:22px;line-height:22px">18</div>
<div class="a lab" style="left:1245px;top:935px">Grid</div>
<div class="a dd" style="left:1439px;top:930px;width:391px;height:21px;line-height:21px">Regular</div>
<svg class="a" style="left:1817px;top:938px" width="8" height="5"><path d="M0 0H8L4 5Z" fill="#111"/></svg>
<div class="a lab" style="left:1245px;top:957px">Shear plane in thread</div>
<div class="a" style="left:1444px;top:956px;width:11px;height:11px;background:#e6e6e6"></div><svg class="a" style="left:1444px;top:953px" width="14" height="14"><path d="M2.5 8.5 L5 11.5 L11.5 2.5" fill="none" stroke="#f5891f" stroke-width="2"/></svg>
<div class="a lab" style="left:1245px;top:980px">Shear force transfer</div>
<div class="a dd" style="left:1439px;top:975px;width:391px;height:21px;line-height:21px">Bearing - tension/shear interaction</div>
<svg class="a" style="left:1817px;top:983px" width="8" height="5"><path d="M0 0H8L4 5Z" fill="#111"/></svg>
<div class="a" style="left:1429px;top:827px;width:96px;height:33px;border:3.8px solid #f00;border-radius:9px"></div>
<div class="a" style="left:1428px;top:898px;width:98px;height:36px;border:3.8px solid #f00;border-radius:9px"></div>
</div>
<!--/PANEL-->
<div id="status" class="a"><svg class="a" style="left:0;top:0" width="1858" height="33" viewBox="0 0 1858 33" preserveAspectRatio="none"><defs><linearGradient id="bs0"><stop offset="0.00" stop-color="rgb(16,16,16)"/><stop offset="0.20" stop-color="rgb(40,40,40)"/><stop offset="0.40" stop-color="rgb(16,16,16)"/><stop offset="0.60" stop-color="rgb(13,13,13)"/><stop offset="0.80" stop-color="rgb(40,40,40)"/><stop offset="1.00" stop-color="rgb(40,40,40)"/></linearGradient><linearGradient id="bs1"><stop offset="0.00" stop-color="rgb(26,26,26)"/><stop offset="0.20" stop-color="rgb(16,16,16)"/><stop offset="0.40" stop-color="rgb(8,8,8)"/><stop offset="0.60" stop-color="rgb(14,14,14)"/><stop offset="0.80" stop-color="rgb(7,7,7)"/><stop offset="1.00" stop-color="rgb(16,16,16)"/></linearGradient><linearGradient id="bs2"><stop offset="0.00" stop-color="rgb(15,15,15)"/><stop offset="0.20" stop-color="rgb(16,16,16)"/><stop offset="0.40" stop-color="rgb(26,26,26)"/><stop offset="0.60" stop-color="rgb(26,26,26)"/><stop offset="0.80" stop-color="rgb(20,20,20)"/><stop offset="1.00" stop-color="rgb(16,16,16)"/></linearGradient><linearGradient id="bs3"><stop offset="0.00" stop-color="rgb(9,9,9)"/><stop offset="0.20" stop-color="rgb(12,12,12)"/><stop offset="0.40" stop-color="rgb(6,6,6)"/><stop offset="0.60" stop-color="rgb(16,16,16)"/><stop offset="0.80" stop-color="rgb(8,8,8)"/><stop offset="1.00" stop-color="rgb(32,32,32)"/></linearGradient><linearGradient id="bs4"><stop offset="0.00" stop-color="rgb(7,7,7)"/><stop offset="0.20" stop-color="rgb(32,32,32)"/><stop offset="0.40" stop-color="rgb(16,16,16)"/><stop offset="0.60" stop-color="rgb(8,8,8)"/><stop offset="0.80" stop-color="rgb(12,12,12)"/><stop offset="1.00" stop-color="rgb(20,20,20)"/></linearGradient><linearGradient id="bs5"><stop offset="0.00" stop-color="rgb(40,40,40)"/><stop offset="0.20" stop-color="rgb(40,40,40)"/><stop offset="0.40" stop-color="rgb(9,9,9)"/><stop offset="0.60" stop-color="rgb(12,12,12)"/><stop offset="0.80" stop-color="rgb(40,40,40)"/><stop offset="1.00" stop-color="rgb(20,20,20)"/></linearGradient><linearGradient id="bs6"><stop offset="0.00" stop-color="rgb(40,40,40)"/><stop offset="0.20" stop-color="rgb(7,7,7)"/><stop offset="0.40" stop-color="rgb(13,13,13)"/><stop offset="0.60" stop-color="rgb(9,9,9)"/><stop offset="0.80" stop-color="rgb(32,32,32)"/><stop offset="1.00" stop-color="rgb(26,26,26)"/></linearGradient><linearGradient id="bs7"><stop offset="0.00" stop-color="rgb(20,20,20)"/><stop offset="0.20" stop-color="rgb(8,8,8)"/><stop offset="0.40" stop-color="rgb(8,8,8)"/><stop offset="0.60" stop-color="rgb(32,32,32)"/><stop offset="0.80" stop-color="rgb(20,20,20)"/><stop offset="1.00" stop-color="rgb(32,32,32)"/></linearGradient><linearGradient id="bs8"><stop offset="0.00" stop-color="rgb(7,7,7)"/><stop offset="0.20" stop-color="rgb(8,8,8)"/><stop offset="0.40" stop-color="rgb(12,12,12)"/><stop offset="0.60" stop-color="rgb(14,14,14)"/><stop offset="0.80" stop-color="rgb(6,6,6)"/><stop offset="1.00" stop-color="rgb(32,32,32)"/></linearGradient><linearGradient id="bs9"><stop offset="0.00" stop-color="rgb(16,16,16)"/><stop offset="0.20" stop-color="rgb(13,13,13)"/><stop offset="0.40" stop-color="rgb(8,8,8)"/><stop offset="0.60" stop-color="rgb(8,8,8)"/><stop offset="0.80" stop-color="rgb(8,8,8)"/><stop offset="1.00" stop-color="rgb(9,9,9)"/></linearGradient><linearGradient id="bs10"><stop offset="0.00" stop-color="rgb(40,40,40)"/><stop offset="0.20" stop-color="rgb(12,12,12)"/><stop offset="0.40" stop-color="rgb(32,32,32)"/><stop offset="0.60" stop-color="rgb(16,16,16)"/><stop offset="0.80" stop-color="rgb(13,13,13)"/><stop offset="1.00" stop-color="rgb(16,16,16)"/></linearGradient><linearGradient id="bs11"><stop offset="0.00" stop-color="rgb(13,13,13)"/><stop offset="0.20" stop-color="rgb(20,20,20)"/><stop offset="0.40" stop-color="rgb(32,32,32)"/><stop offset="0.60" stop-color="rgb(6,6,6)"/><stop offset="0.80" stop-color="rgb(20,20,20)"/><stop offset="1.00" stop-color="rgb(8,8,8)"/></linearGradient><linearGradient id="bs12"><stop offset="0.00" stop-color="rgb(32,32,32)"/><stop offset="0.20" stop-color="rgb(26,26,26)"/><stop offset="0.40" stop-color="rgb(16,16,16)"/><stop offset="0.60" stop-color="rgb(26,26,26)"/><stop offset="0.80" stop-color="rgb(32,32,32)"/><stop offset="1.00" stop-color="rgb(11,11,11)"/></linearGradient><linearGradient id="bs13"><stop offset="0.00" stop-color="rgb(10,10,10)"/><stop offset="0.20" stop-color="rgb(40,40,40)"/><stop offset="0.40" stop-color="rgb(16,16,16)"/><stop offset="0.60" stop-color="rgb(7,7,7)"/><stop offset="0.80" stop-color="rgb(12,12,12)"/><stop offset="1.00" stop-color="rgb(32,32,32)"/></linearGradient><linearGradient id="bs14"><stop offset="0.00" stop-color="rgb(12,12,12)"/><stop offset="0.20" stop-color="rgb(12,12,12)"/><stop offset="0.40" stop-color="rgb(8,8,8)"/><stop offset="0.60" stop-color="rgb(8,8,8)"/><stop offset="0.80" stop-color="rgb(32,32,32)"/><stop offset="1.00" stop-color="rgb(32,32,32)"/></linearGradient><linearGradient id="bs15"><stop offset="0.00" stop-color="rgb(15,15,15)"/><stop offset="0.20" stop-color="rgb(40,40,40)"/><stop offset="0.40" stop-color="rgb(16,16,16)"/><stop offset="0.60" stop-color="rgb(15,15,15)"/><stop offset="0.80" stop-color="rgb(12,12,12)"/><stop offset="1.00" stop-color="rgb(12,12,12)"/></linearGradient><linearGradient id="bs16"><stop offset="0.00" stop-color="rgb(8,8,8)"/><stop offset="0.20" stop-color="rgb(13,13,13)"/><stop offset="0.40" stop-color="rgb(11,11,11)"/><stop offset="0.60" stop-color="rgb(20,20,20)"/><stop offset="0.80" stop-color="rgb(7,7,7)"/><stop offset="1.00" stop-color="rgb(8,8,8)"/></linearGradient><linearGradient id="bs17"><stop offset="0.00" stop-color="rgb(20,20,20)"/><stop offset="0.20" stop-color="rgb(32,32,32)"/><stop offset="0.40" stop-color="rgb(8,8,8)"/><stop offset="0.60" stop-color="rgb(20,20,20)"/><stop offset="0.80" stop-color="rgb(32,32,32)"/><stop offset="1.00" stop-color="rgb(26,26,26)"/></linearGradient><linearGradient id="bs18"><stop offset="0.00" stop-color="rgb(16,16,16)"/><stop offset="0.20" stop-color="rgb(10,10,10)"/><stop offset="0.40" stop-color="rgb(26,26,26)"/><stop offset="0.60" stop-color="rgb(16,16,16)"/><stop offset="0.80" stop-color="rgb(9,9,9)"/><stop offset="1.00" stop-color="rgb(12,12,12)"/></linearGradient><linearGradient id="bs19"><stop offset="0.00" stop-color="rgb(12,12,12)"/><stop offset="0.20" stop-color="rgb(26,26,26)"/><stop offset="0.40" stop-color="rgb(8,8,8)"/><stop offset="0.60" stop-color="rgb(12,12,12)"/><stop offset="0.80" stop-color="rgb(9,9,9)"/><stop offset="1.00" stop-color="rgb(7,7,7)"/></linearGradient><linearGradient id="bs20"><stop offset="0.00" stop-color="rgb(6,6,6)"/><stop offset="0.20" stop-color="rgb(20,20,20)"/><stop offset="0.40" stop-color="rgb(9,9,9)"/><stop offset="0.60" stop-color="rgb(11,11,11)"/><stop offset="0.80" stop-color="rgb(16,16,16)"/><stop offset="1.00" stop-color="rgb(8,8,8)"/></linearGradient><linearGradient id="bs21"><stop offset="0.00" stop-color="rgb(40,40,40)"/><stop offset="0.20" stop-color="rgb(7,7,7)"/><stop offset="0.40" stop-color="rgb(40,40,40)"/><stop offset="0.60" stop-color="rgb(26,26,26)"/><stop offset="0.80" stop-color="rgb(40,40,40)"/><stop offset="1.00" stop-color="rgb(6,6,6)"/></linearGradient><linearGradient id="bs22"><stop offset="0.00" stop-color="rgb(26,26,26)"/><stop offset="0.20" stop-color="rgb(11,11,11)"/><stop offset="0.40" stop-color="rgb(16,16,16)"/><stop offset="0.60" stop-color="rgb(8,8,8)"/><stop offset="0.80" stop-color="rgb(16,16,16)"/><stop offset="1.00" stop-color="rgb(32,32,32)"/></linearGradient><linearGradient id="bs23"><stop offset="0.00" stop-color="rgb(9,9,9)"/><stop offset="0.20" stop-color="rgb(11,11,11)"/><stop offset="0.40" stop-color="rgb(16,16,16)"/><stop offset="0.60" stop-color="rgb(16,16,16)"/><stop offset="0.80" stop-color="rgb(8,8,8)"/><stop offset="1.00" stop-color="rgb(14,14,14)"/></linearGradient><linearGradient id="bs24"><stop offset="0.00" stop-color="rgb(20,20,20)"/><stop offset="0.20" stop-color="rgb(20,20,20)"/><stop offset="0.40" stop-color="rgb(8,8,8)"/><stop offset="0.60" stop-color="rgb(7,7,7)"/><stop offset="0.80" stop-color="rgb(12,12,12)"/><stop offset="1.00" stop-color="rgb(12,12,12)"/></linearGradient><linearGradient id="bs25"><stop offset="0.00" stop-color="rgb(16,16,16)"/><stop offset="0.20" stop-color="rgb(8,8,8)"/><stop offset="0.40" stop-color="rgb(26,26,26)"/><stop offset="0.60" stop-color="rgb(12,12,12)"/><stop offset="0.80" stop-color="rgb(40,40,40)"/><stop offset="1.00" stop-color="rgb(11,11,11)"/></linearGradient><linearGradient id="bs26"><stop offset="0.00" stop-color="rgb(12,12,12)"/><stop offset="0.20" stop-color="rgb(9,9,9)"/><stop offset="0.40" stop-color="rgb(12,12,12)"/><stop offset="0.60" stop-color="rgb(12,12,12)"/><stop offset="0.80" stop-color="rgb(8,8,8)"/><stop offset="1.00" stop-color="rgb(16,16,16)"/></linearGradient><linearGradient id="bs27"><stop offset="0.00" stop-color="rgb(12,12,12)"/><stop offset="0.20" stop-color="rgb(8,8,8)"/><stop offset="0.40" stop-color="rgb(16,16,16)"/><stop offset="0.60" stop-color="rgb(12,12,12)"/><stop offset="0.80" stop-color="rgb(26,26,26)"/><stop offset="1.00" stop-color="rgb(14,14,14)"/></linearGradient><linearGradient id="bs28"><stop offset="0.00" stop-color="rgb(16,16,16)"/><stop offset="0.20" stop-color="rgb(26,26,26)"/><stop offset="0.40" stop-color="rgb(8,8,8)"/><stop offset="0.60" stop-color="rgb(20,20,20)"/><stop offset="0.80" stop-color="rgb(9,9,9)"/><stop offset="1.00" stop-color="rgb(40,40,40)"/></linearGradient><linearGradient id="bs29"><stop offset="0.00" stop-color="rgb(13,13,13)"/><stop offset="0.20" stop-color="rgb(26,26,26)"/><stop offset="0.40" stop-color="rgb(12,12,12)"/><stop offset="0.60" stop-color="rgb(32,32,32)"/><stop offset="0.80" stop-color="rgb(8,8,8)"/><stop offset="1.00" stop-color="rgb(9,9,9)"/></linearGradient><linearGradient id="bs30"><stop offset="0.00" stop-color="rgb(15,15,15)"/><stop offset="0.20" stop-color="rgb(13,13,13)"/><stop offset="0.40" stop-color="rgb(12,12,12)"/><stop offset="0.60" stop-color="rgb(26,26,26)"/><stop offset="0.80" stop-color="rgb(16,16,16)"/><stop offset="1.00" stop-color="rgb(12,12,12)"/></linearGradient><linearGradient id="bs31"><stop offset="0.00" stop-color="rgb(9,9,9)"/><stop offset="0.20" stop-color="rgb(26,26,26)"/><stop offset="0.40" stop-color="rgb(16,16,16)"/><stop offset="0.60" stop-color="rgb(40,40,40)"/><stop offset="0.80" stop-color="rgb(20,20,20)"/><stop offset="1.00" stop-color="rgb(14,14,14)"/></linearGradient><linearGradient id="bs32"><stop offset="0.00" stop-color="rgb(10,10,10)"/><stop offset="0.20" stop-color="rgb(10,10,10)"/><stop offset="0.40" stop-color="rgb(12,12,12)"/><stop offset="0.60" stop-color="rgb(16,16,16)"/><stop offset="0.80" stop-color="rgb(20,20,20)"/><stop offset="1.00" stop-color="rgb(8,8,8)"/></linearGradient></defs><rect x="0" y="0" width="1858" height="1" fill="url(#bs0)"/><rect x="0" y="1" width="1858" height="1" fill="url(#bs1)"/><rect x="0" y="2" width="1858" height="1" fill="url(#bs2)"/><rect x="0" y="3" width="1858" height="1" fill="url(#bs3)"/><rect x="0" y="4" width="1858" height="1" fill="url(#bs4)"/><rect x="0" y="5" width="1858" height="1" fill="url(#bs5)"/><rect x="0" y="6" width="1858" height="1" fill="url(#bs6)"/><rect x="0" y="7" width="1858" height="1" fill="url(#bs7)"/><rect x="0" y="8" width="1858" height="1" fill="url(#bs8)"/><rect x="0" y="9" width="1858" height="1" fill="url(#bs9)"/><rect x="0" y="10" width="1858" height="1" fill="url(#bs10)"/><rect x="0" y="11" width="1858" height="1" fill="url(#bs11)"/><rect x="0" y="12" width="1858" height="1" fill="url(#bs12)"/><rect x="0" y="13" width="1858" height="1" fill="url(#bs13)"/><rect x="0" y="14" width="1858" height="1" fill="url(#bs14)"/><rect x="0" y="15" width="1858" height="1" fill="url(#bs15)"/><rect x="0" y="16" width="1858" height="1" fill="url(#bs16)"/><rect x="0" y="17" width="1858" height="1" fill="url(#bs17)"/><rect x="0" y="18" width="1858" height="1" fill="url(#bs18)"/><rect x="0" y="19" width="1858" height="1" fill="url(#bs19)"/><rect x="0" y="20" width="1858" height="1" fill="url(#bs20)"/><rect x="0" y="21" width="1858" height="1" fill="url(#bs21)"/><rect x="0" y="22" width="1858" height="1" fill="url(#bs22)"/><rect x="0" y="23" width="1858" height="1" fill="url(#bs23)"/><rect x="0" y="24" width="1858" height="1" fill="url(#bs24)"/><rect x="0" y="25" width="1858" height="1" fill="url(#bs25)"/><rect x="0" y="26" width="1858" height="1" fill="url(#bs26)"/><rect x="0" y="27" width="1858" height="1" fill="url(#bs27)"/><rect x="0" y="28" width="1858" height="1" fill="url(#bs28)"/><rect x="0" y="29" width="1858" height="1" fill="url(#bs29)"/><rect x="0" y="30" width="1858" height="1" fill="url(#bs30)"/><rect x="0" y="31" width="1858" height="1" fill="url(#bs31)"/><rect x="0" y="32" width="1858" height="1" fill="url(#bs32)"/></svg></div>
<!--MISC-->
<svg class="a" style="left:0;top:155px" width="270" height="26" viewBox="0 155 270 26">
<rect x="11.5" y="159.5" width="31" height="18" fill="none" stroke="#222" stroke-width="1" stroke-dasharray="2 1.5"/>
<path d="M19 168 L28 160 L37 168 M21 167 V178 H35 V167 M25 178 V172 H31 V178" fill="none" stroke="#fff" stroke-width="2"/>
<path d="M56 159 H69 V169 M56 159 V173 H63" fill="none" stroke="#fff" stroke-width="1.5"/><circle cx="68" cy="172" r="4.5" fill="none" stroke="#fff" stroke-width="1.5"/><path d="M71 175 L75 179" stroke="#fff" stroke-width="1.8"/>
<circle cx="99.5" cy="167" r="7.3" fill="none" stroke="#fff" stroke-width="2"/><path d="M105 172.5 L110 178" stroke="#fff" stroke-width="2.4"/>
<path d="M137 159 V179 M127 169 H147" stroke="#fff" stroke-width="2"/><path d="M137 158 L133.5 162.5 H140.5 Z M137 180 L133.5 175.5 H140.5 Z M126 169 L130.5 165.5 V172.5 Z M148 169 L143.5 165.5 V172.5 Z" fill="#fff"/>
<path d="M179 163 A7 7 0 1 0 180 171" fill="none" stroke="#fff" stroke-width="2"/><path d="M181 159 L181 166 L174 165 Z" fill="#fff"/>
<path d="M199 161 L203 165 M215 161 L211 165 M199 177 L203 173 M215 177 L211 173" stroke="#fff" stroke-width="1.2"/><path d="M198.5 160.5 h4 M198.5 160.5 v4 M215.5 160.5 h-4 M215.5 160.5 v4 M198.5 177.5 h4 M198.5 177.5 v-4 M215.5 177.5 h-4 M215.5 177.5 v-4" stroke="#fff" stroke-width="1.2"/>
<path d="M232 169 L247 163 L252 165 L252 170 L237 177 L232 175 Z" fill="#f26f22"/><path d="M232 169 L237 171 L252 165 M237 171 V177" fill="none" stroke="#e05a10" stroke-width="0.8"/>
</svg>
<div class="a" style="left:1004px;top:162px;font-size:12px;font-weight:bold;color:#fff;line-height:14px">Solid</div>
<div class="a" style="left:1044px;top:162px;font-size:12px;color:#fff;line-height:14px">Transparent</div>
<div class="a" style="left:1122px;top:162px;font-size:12px;color:#fff;line-height:14px">Wireframe</div>
<div class="a" style="left:1px;top:192px;width:554px;height:52px;border:4px solid #f00;border-radius:9px"></div>
<svg class="a" style="left:8.5px;top:200.5px" width="17" height="17"><circle cx="8.5" cy="8.5" r="8" fill="#f2845a"/><path d="M5 5 L12 12 M12 5 L5 12" stroke="#fff" stroke-width="2"/></svg>
<div class="a" style="left:28px;top:203px;font-size:11.6px;font-weight:bold;color:#e00;line-height:14px">Analysis</div>
<div class="a" style="left:9px;top:219px;font-size:12px;color:#111;line-height:14px;white-space:nowrap">Bolts are too close to plate edge or outside of the connected plate. - Manufacturing operations:CPL1</div>
<svg class="a" style="left:1085px;top:200px" width="100" height="90" viewBox="1085 200 100 90">
<path fill-rule="evenodd" d="M1093.75 262 A41.25 22 0 1 0 1176.25 262 A41.25 22 0 1 0 1093.75 262 Z M1103.5 262 A31.5 14.5 0 1 0 1166.5 262 A31.5 14.5 0 1 0 1103.5 262 Z" fill="#dcdcdc"/>
<path d="M1106.25 226.7 L1128.3 214.2 L1161.25 220.4 L1158.75 252.5 L1142.5 272.9 L1109.6 259.6 Z" fill="#a2a2a2"/>
<path d="M1106.25 226.7 L1142.9 236.25 L1161.25 220.4 L1128.3 214.2 Z" fill="#adadad"/>
<path d="M1109.6 259.6 L1129.6 243.75 L1158.75 252.5 L1142.5 272.9 Z" fill="#959595"/>
<path d="M1106.25 226.7 L1128.3 214.2 L1161.25 220.4 L1142.9 236.25 Z M1106.25 226.7 L1109.6 259.6 L1142.5 272.9 L1158.75 252.5 L1161.25 220.4 M1142.9 236.25 L1142.5 272.9 M1128.3 214.2 L1129.6 243.75 L1109.6 259.6 M1129.6 243.75 L1158.75 252.5" fill="none" stroke="#737373" stroke-width="0.9"/>
<path d="M1131 223.5 L1136 224.5 M1126 250 L1128 248 M1151.5 245 L1153 241" stroke="#fff" stroke-width="1.2"/><text x="1125" y="254" font-family="Liberation Sans" font-size="7" fill="#fff">Y</text>
<path d="M1097 245 L1106 243 M1102 247 L1104 241 M1167 266 L1177 269 M1104.5 283 L1110.5 273 M1106 280 L1118 276" stroke="#8a8a8a" stroke-width="1.5"/>
</svg>
<svg class="a" style="left:1078px;top:309px" width="7" height="7"><path d="M6 0 V6 H0 Z" fill="#444"/></svg>
<div class="a" style="left:1101px;top:305px;font-size:12.5px;font-weight:bold;color:#333;line-height:15px">Members</div>
<div class="a" style="left:1102px;top:329px;width:10px;height:10px;background:#e4e4e4"></div><svg class="a" style="left:1102px;top:325px" width="14" height="14"><path d="M2 8.5 L4.5 11.5 L11 2.5" fill="none" stroke="#f5891f" stroke-width="2"/></svg>
<div class="a" style="left:1128px;top:328px;font-size:12px;color:#333;line-height:14px;text-decoration:underline">B1</div>
<div class="a" style="left:1102px;top:351px;width:10px;height:10px;background:#e4e4e4"></div><svg class="a" style="left:1102px;top:347px" width="14" height="14"><path d="M2 8.5 L4.5 11.5 L11 2.5" fill="none" stroke="#f5891f" stroke-width="2"/></svg>
<div class="a" style="left:1128px;top:350px;font-size:12px;color:#333;line-height:14px">B2</div>
<svg class="a" style="left:1078px;top:375px" width="7" height="7"><path d="M6 0 V6 H0 Z" fill="#444"/></svg>
<div class="a" style="left:1101px;top:371px;font-size:12.5px;font-weight:bold;color:#333;line-height:15px">Load effects</div>
<div class="a" style="left:1102px;top:395px;width:10px;height:10px;background:#e4e4e4"></div><svg class="a" style="left:1102px;top:391px" width="14" height="14"><path d="M2 8.5 L4.5 11.5 L11 2.5" fill="none" stroke="#f5891f" stroke-width="2"/></svg>
<div class="a" style="left:1128px;top:394px;font-size:12px;color:#333;line-height:14px">LE1</div>
<svg class="a" style="left:1078px;top:419px" width="7" height="7"><path d="M6 0 V6 H0 Z" fill="#444"/></svg>
<div class="a" style="left:1101px;top:415px;font-size:12.5px;font-weight:bold;color:#333;line-height:15px">Operations</div>
<svg class="a" style="left:1091px;top:433px" width="90" height="22"><path d="M0 0 H75 L89 10.5 L75 21 H0 Z" fill="#f26f22"/></svg>
<div class="a" style="left:1102px;top:439px;width:10px;height:10px;background:#e4e4e4"></div><svg class="a" style="left:1102px;top:435px" width="14" height="14"><path d="M2 8.5 L4.5 11.5 L11 2.5" fill="none" stroke="#f5891f" stroke-width="2"/></svg>
<div class="a" style="left:1128px;top:438px;font-size:12.5px;font-weight:bold;color:#fff;line-height:15px">CPL1</div>
<div class="a" style="left:23px;top:1059px;font-size:12px;color:#8a8a8a;line-height:14px;white-space:nowrap">Design code:</div>
<div class="a" style="left:99px;top:1059px;font-size:11.6px;font-weight:bold;color:#fff;line-height:14px;white-space:nowrap">EN</div>
<div class="a" style="left:134px;top:1059px;font-size:12px;color:#8a8a8a;line-height:14px;white-space:nowrap">Analysis:</div>
<div class="a" style="left:185px;top:1059px;font-size:11.6px;font-weight:bold;color:#fff;line-height:14px;white-space:nowrap">Stress, strain</div>
<div class="a" style="left:276px;top:1059px;font-size:12px;color:#8a8a8a;line-height:14px;white-space:nowrap">Load effects:</div>
<div class="a" style="left:353px;top:1059px;font-size:11.6px;font-weight:bold;color:#fff;line-height:14px;white-space:nowrap">Equilibrium not required</div>
<div class="a" style="left:508px;top:1059px;font-size:12px;color:#8a8a8a;line-height:14px;white-space:nowrap">Units:</div>
<div class="a" style="left:548px;top:1059px;font-size:11.6px;font-weight:bold;color:#fff;line-height:14px;white-space:nowrap">mm</div>
<div class="a" style="left:1735px;top:1059px;font-size:12px;line-height:14px;white-space:nowrap;color:#f26f22">www.<span style="color:#fff">ideastatica</span>.com</div>
<!--/MISC-->
</body></html>
